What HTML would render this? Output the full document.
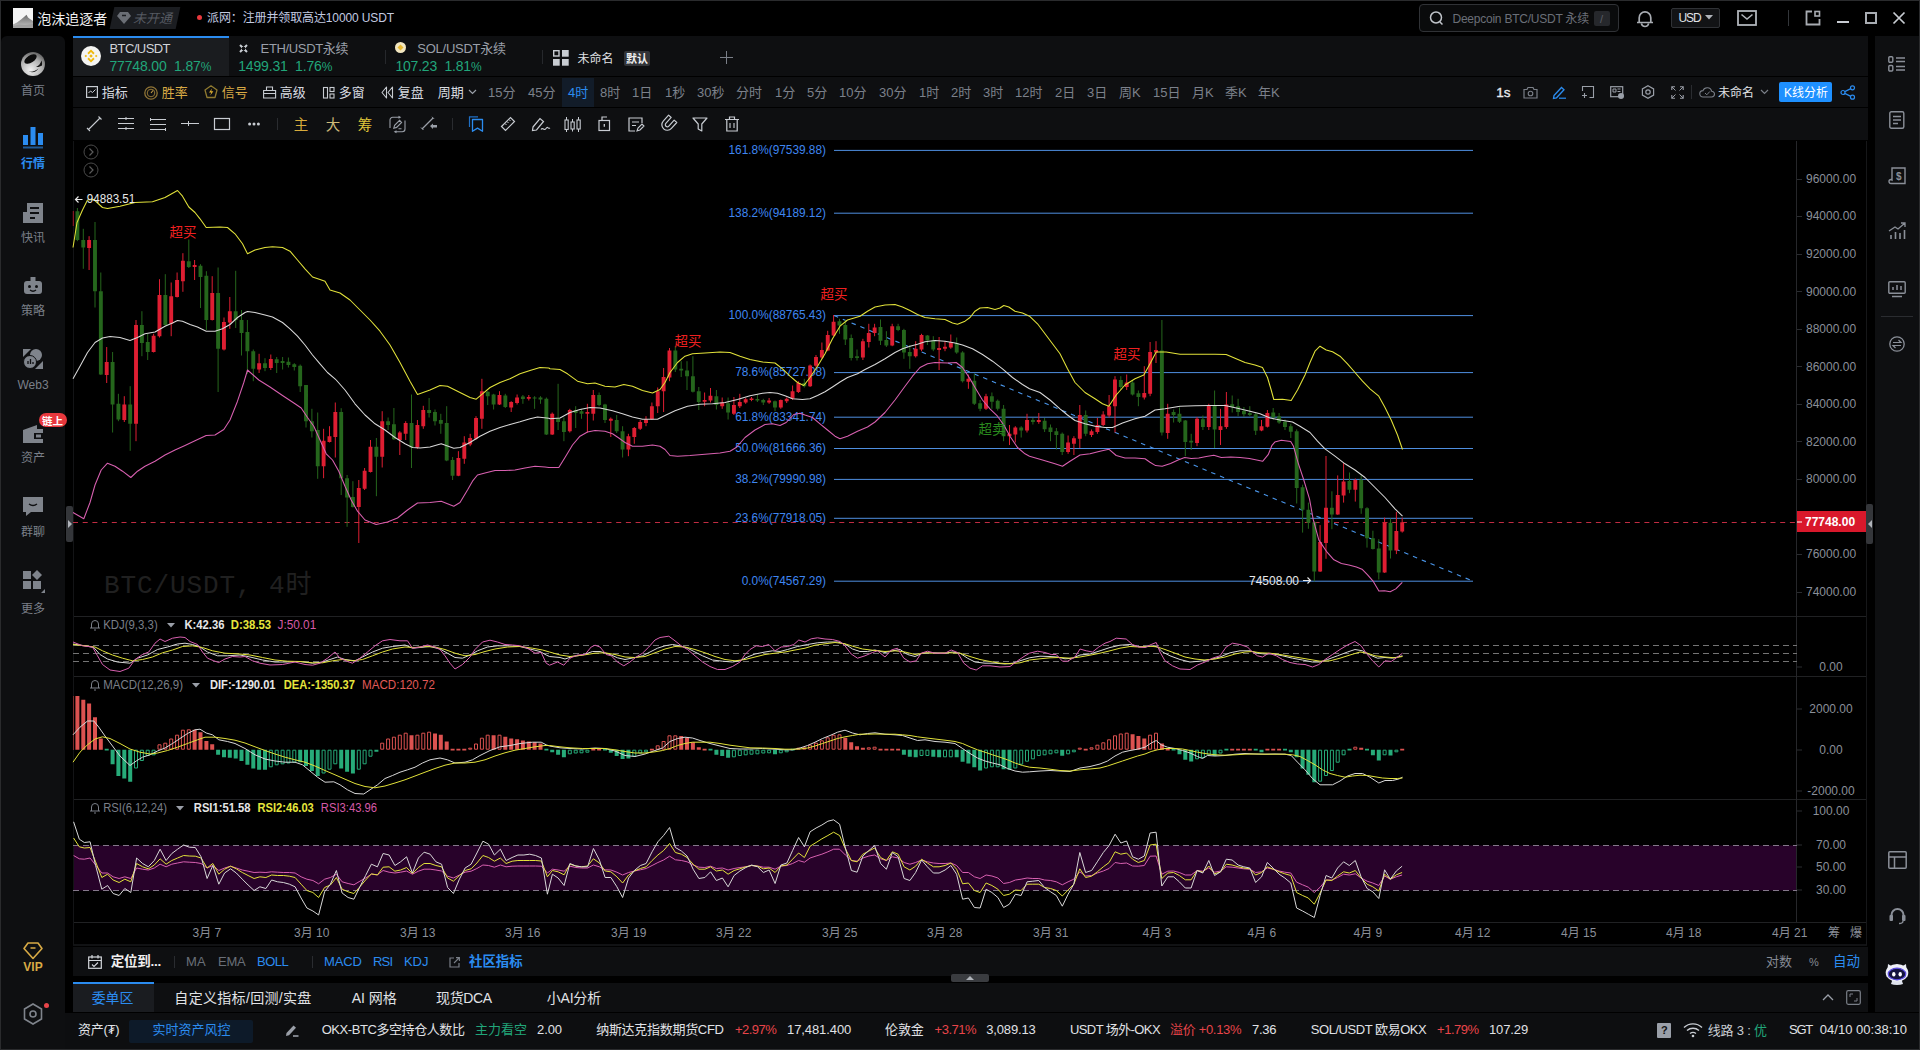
<!DOCTYPE html>
<html lang="zh-CN"><head><meta charset="utf-8"><title>BTC/USDT</title><style>
*{box-sizing:border-box;margin:0;padding:0}
html,body{width:1920px;height:1050px;overflow:hidden;background:#000}
body{position:relative;font-family:"Liberation Sans","Noto Sans CJK SC",sans-serif;font-size:12px;color:#d4d7dc}
.a{position:absolute}
.t{position:absolute;white-space:nowrap;line-height:20px;height:20px}
.p{position:absolute;background:#0e0f11}
.g{color:#8a8f99}
.w{color:#d4d7dc}
.b{color:#2b8cf0}
.gold{color:#d8aa45}
.up{color:#21a67a}
.rd{color:#e8454a}
svg.i{position:absolute;overflow:visible}
</style></head><body>
<div class="a" style="left:0;top:0;width:1920px;height:1050px;border:1px solid #2a2b2d;border-bottom:2px solid #2a2b2d"></div>
<div class="p" style="left:1px;top:36px;width:64px;height:1013px;border-radius:6px 6px 0 0"></div>
<div class="p" style="left:73px;top:36px;width:1795px;height:40px;"></div>
<div class="p" style="left:73px;top:77px;width:1795px;height:30px;"></div>
<div class="p" style="left:73px;top:108px;width:1795px;height:32px;"></div>
<div class="p" style="left:73px;top:947px;width:1795px;height:29px;"></div>
<div class="p" style="left:73px;top:983px;width:1795px;height:29px;"></div>
<div class="p" style="left:65px;top:1013px;width:1854px;height:36px;background:#0d0e10"></div>
<div class="p" style="left:1875px;top:36px;width:44px;height:976px"></div>
<svg class="i" style="left:13px;top:8px" width="20" height="20"><defs><linearGradient id="av" x1="0" y1="0" x2="0" y2="1"><stop offset="0" stop-color="#6a6a6a"/><stop offset="1" stop-color="#c8c8c8"/></linearGradient></defs><rect width="20" height="20" fill="#f4f4f4"/><path d="M0,20v-3.500l4,-2l4,-3l3,-2.500l2.500,-2.200l1.500,2.700l2,1.500l3,2v7z" fill="url(#av)"/><path d="M0,20v-2l6,-1.500l6,0.500l8,-1v4z" fill="#9a9a9a" opacity="0.8"/></svg>
<span class="t " style="left:37.3px;top:9px;font-size:14px;color:#f0f0f0">泡沫追逐者</span>
<div class="a" style="left:112px;top:7px;width:66px;height:22px;background:#1b1d21;transform:skewX(-12deg)"></div>
<svg class="i" style="left:117px;top:11px" width="14" height="13"><path d="M3,1h8l3,4l-7,8l-7,-8z" fill="#6a6e75"/><path d="M5,4.5h4" stroke="#1b1d21" stroke-width="1.5"/></svg>
<span class="t " style="left:133px;top:9px;font-size:13px;color:#565a62;font-style:italic">未开通</span>
<div class="a" style="left:197px;top:15px;width:5px;height:5px;border-radius:50%;background:#e8383d"></div>
<span class="t " style="left:207px;top:8.399999999999999px;font-size:12px;color:#c2cae0;letter-spacing:-0.119px">派网：注册并领取高达10000 USDT</span>
<div class="a" style="left:1419px;top:4px;width:200px;height:28px;border:1px solid #303236;border-radius:4px;background:#0a0b0c"></div>
<svg class="i" style="left:1429px;top:10px" width="16" height="16"><circle cx="7" cy="7.5" r="5.5" fill="none" stroke="#c0c4ca" stroke-width="1.5"/><path d="M11,12l2.5,2.5" stroke="#c0c4ca" stroke-width="1.5"/></svg>
<span class="t " style="left:1452.5px;top:9px;font-size:12px;color:#6a6f78;letter-spacing:-0.238px">Deepcoin BTC/USDT 永续</span>
<div class="a" style="left:1594px;top:11px;width:16px;height:15px;background:#26282c;border-radius:2px"></div>
<span class="t " style="left:1600px;top:9px;font-size:11px;color:#5a5e66">/</span>
<svg class="i" style="left:1636px;top:9px" width="18" height="19"><path d="M1,13.500h16M3.200,13.500v-4.800a5.800,5.800 0 0 1 11.600,0v4.800M5.500,14.500a3.500,3 0 0 0 7,0" fill="none" stroke="#a8acb2" stroke-width="1.700"/></svg>
<div class="a" style="left:1671px;top:8px;width:49px;height:20px;border:1px solid #303236;border-radius:2px;background:#121315"></div>
<span class="t " style="left:1678.5px;top:8.3px;font-size:12px;color:#e0e2e6;letter-spacing:-1.115px">USD</span>
<svg class="i" style="left:1705px;top:15px" width="8" height="5"><path d="M0,0h8l-4,4.5z" fill="#b0b4ba"/></svg>
<svg class="i" style="left:1737px;top:10px" width="20" height="16"><rect x="1" y="1" width="18" height="14" fill="none" stroke="#b0b4ba" stroke-width="1.800"/><path d="M4.500,4.500l5.500,4.500l5.500,-4.500" fill="none" stroke="#b0b4ba" stroke-width="1.600"/></svg>
<div class="a" style="left:1788px;top:10px;width:1px;height:16px;background:#33363a"></div>
<svg class="i" style="left:1805px;top:10px" width="16" height="16"><path d="M7,1.500H1.500V14.500H14.500V9" fill="none" stroke="#a8acb2" stroke-width="1.800"/><rect x="10" y="1.500" width="4.500" height="4.500" fill="none" stroke="#a8acb2" stroke-width="1.600"/></svg>
<div class="a" style="left:1837px;top:21px;width:12px;height:2px;background:#c8ccd2"></div>
<div class="a" style="left:1865px;top:12px;width:12px;height:12px;border:2px solid #a8acb2"></div>
<svg class="i" style="left:1893px;top:12px" width="12" height="12"><path d="M0.5,0.5l11,11M11.5,0.5l-11,11" stroke="#c8ccd2" stroke-width="1.7"/></svg>
<div class="a" style="left:73px;top:38px;width:156px;height:38px;background:#1a1c1f"></div>
<div class="a" style="left:73px;top:36px;width:156px;height:2px;background:#2b8cf0"></div>
<div class="a" style="left:81px;top:46px;width:20px;height:20px;border-radius:50%;background:#f4f4f2"></div>
<svg class="i" style="left:84px;top:49px" width="14" height="14" viewBox="0 0 14 14"><g fill="#f0b90b"><path d="M7,5.200L8.800,7L7,8.800L5.200,7Z"/><path d="M7,0.500L10.600,4.100L9.300,5.400L7,3.100L4.700,5.400L3.400,4.100Z"/><path d="M7,13.500L10.600,9.900L9.300,8.600L7,10.900L4.700,8.600L3.400,9.900Z"/><path d="M1.800,5.700L3.100,7L1.800,8.300L0.500,7Z"/><path d="M12.200,5.700L13.500,7L12.200,8.300L10.900,7Z"/></g></svg>
<span class="t " style="left:109.4px;top:39px;font-size:13px;color:#d0d3d8;letter-spacing:-0.550px">BTC/USDT</span>
<span class="t up" style="left:109.4px;top:56.3px;font-size:14px;;letter-spacing:-0.153px">77748.00&nbsp;&nbsp;1.87<span style="font-size:12px">%</span></span>
<svg class="i" style="left:239px;top:44px" width="9" height="9"><path d="M1,1l7,7M8,1l-7,7" stroke="#c8ccd2" stroke-width="2"/><rect x="3" y="3" width="3" height="3" fill="#0e0f11"/></svg>
<span class="t " style="left:260.6px;top:39px;font-size:13px;color:#9a9fa8;letter-spacing:-0.352px">ETH/USDT永续</span>
<span class="t up" style="left:238.2px;top:56.3px;font-size:14px;;letter-spacing:-0.165px">1499.31&nbsp;&nbsp;1.76<span style="font-size:12px">%</span></span>
<div class="a" style="left:385px;top:50px;width:1px;height:14px;background:#26282c"></div>
<div class="a" style="left:395px;top:42px;width:11px;height:11px;border-radius:50%;background:#f2e6c0"></div>
<svg class="i" style="left:397px;top:44px" width="7" height="7"><path d="M3.5,0.5l3,3l-3,3l-3,-3z" fill="#e8b830"/></svg>
<span class="t " style="left:417.3px;top:39px;font-size:13px;color:#9a9fa8;letter-spacing:-0.252px">SOL/USDT永续</span>
<span class="t up" style="left:395.4px;top:56.3px;font-size:14px;;letter-spacing:-0.195px">107.23&nbsp;&nbsp;1.81<span style="font-size:12px">%</span></span>
<div class="a" style="left:542px;top:50px;width:1px;height:14px;background:#26282c"></div>
<svg class="i" style="left:553px;top:50px" width="16" height="16"><g fill="#c8ccd2"><rect x="0.700" y="0.700" width="5.300" height="5.300" fill="none" stroke="#c8ccd2" stroke-width="1.400"/><rect x="9" y="0" width="6.700" height="6.700"/><rect x="0" y="9" width="6.700" height="6.700"/><rect x="9" y="9" width="6.700" height="6.700"/></g></svg>
<span class="t " style="left:577.5px;top:48.8px;font-size:12px;color:#e0e2e6">未命名</span>
<div class="a" style="left:624px;top:51px;width:26px;height:15px;background:#323438;border-radius:2px"></div>
<span class="t " style="left:626px;top:49.2px;font-size:11px;color:#f0f0f0;font-weight:bold">默认</span>
<svg class="i" style="left:720px;top:51px" width="13" height="13"><path d="M6.5,0v13M0,6.5h13" stroke="#7a7f88" stroke-width="1"/></svg>
<svg class="i" style="left:86px;top:86px" width="12" height="12"><rect x="0.600" y="0.600" width="10.800" height="10.800" fill="none" stroke="#c8ccd2" stroke-width="1.200"/><path d="M2.500,7l2,-2l2,1.500l3,-3" fill="none" stroke="#c8ccd2" stroke-width="1"/></svg>
<span class="t " style="left:101.8px;top:83.3px;font-size:13px;color:#d8dbe0">指标</span>
<svg class="i" style="left:144px;top:85.5px" width="14" height="14"><circle cx="7" cy="7" r="6.200" fill="none" stroke="#8f7436" stroke-width="1.300"/><circle cx="7" cy="7" r="3.800" fill="none" stroke="#8f7436" stroke-width="1"/><path d="M7,7l2,-2.500" stroke="#c09a45" stroke-width="1.200"/></svg>
<span class="t gold" style="left:161.8px;top:83.3px;font-size:13px;">胜率</span>
<svg class="i" style="left:204px;top:85px" width="14" height="14"><path d="M7,0.800l6,4.200l-2,7.500h-8l-2,-7.500z" fill="none" stroke="#8f7a30" stroke-width="1.300" stroke-linejoin="round"/><path d="M8,3.500l-3,4h2.200l-1,3l3.200,-4.200h-2.200z" fill="#e0b030"/></svg>
<span class="t gold" style="left:221.8px;top:83.3px;font-size:13px;">信号</span>
<svg class="i" style="left:263px;top:86px" width="14" height="13"><path d="M0.600,4.500h12v7.500h-12zM3.500,4.500v-3.500h6v3.500M0.600,7.500h12" fill="none" stroke="#c8ccd2" stroke-width="1.100"/></svg>
<span class="t " style="left:279.8px;top:83.3px;font-size:13px;color:#d8dbe0">高级</span>
<svg class="i" style="left:322.5px;top:86.5px" width="12" height="12"><rect x="0.500" y="0.500" width="4" height="10.500" fill="none" stroke="#c8ccd2" stroke-width="1.100"/><rect x="7" y="0.500" width="4" height="4" fill="none" stroke="#c8ccd2" stroke-width="1.100"/><rect x="7" y="7" width="4" height="4" fill="none" stroke="#c8ccd2" stroke-width="1.100"/></svg>
<span class="t " style="left:338.8px;top:83.3px;font-size:13px;color:#d8dbe0">多窗</span>
<svg class="i" style="left:381px;top:86px" width="13" height="13"><path d="M5.500,1l-4.500,5.500l4.500,5.500zM11.500,1l-4.500,5.500l4.500,5.500z" fill="none" stroke="#c8ccd2" stroke-width="1.100" stroke-linejoin="round"/></svg>
<span class="t " style="left:397.8px;top:83.3px;font-size:13px;color:#d8dbe0">复盘</span>
<span class="t " style="left:437.8px;top:83.3px;font-size:13px;color:#d8dbe0">周期</span>
<svg class="i" style="left:468px;top:89px" width="9" height="6"><path d="M1,1l3.5,3.5l3.5,-3.5" fill="none" stroke="#9a9fa8" stroke-width="1.2"/></svg>
<div class="a" style="left:562px;top:78px;width:32px;height:29px;background:#121c29"></div>
<span class="t " style="left:488px;top:83px;font-size:13px;color:#7c818b">15分</span>
<span class="t " style="left:528px;top:83px;font-size:13px;color:#7c818b">45分</span>
<span class="t b" style="left:568px;top:83px;font-size:13px;">4时</span>
<span class="t " style="left:600px;top:83px;font-size:13px;color:#7c818b">8时</span>
<span class="t " style="left:632px;top:83px;font-size:13px;color:#7c818b">1日</span>
<span class="t " style="left:665px;top:83px;font-size:13px;color:#7c818b">1秒</span>
<span class="t " style="left:697px;top:83px;font-size:13px;color:#7c818b">30秒</span>
<span class="t " style="left:736px;top:83px;font-size:13px;color:#7c818b">分时</span>
<span class="t " style="left:775px;top:83px;font-size:13px;color:#7c818b">1分</span>
<span class="t " style="left:807px;top:83px;font-size:13px;color:#7c818b">5分</span>
<span class="t " style="left:839px;top:83px;font-size:13px;color:#7c818b">10分</span>
<span class="t " style="left:879px;top:83px;font-size:13px;color:#7c818b">30分</span>
<span class="t " style="left:919px;top:83px;font-size:13px;color:#7c818b">1时</span>
<span class="t " style="left:951px;top:83px;font-size:13px;color:#7c818b">2时</span>
<span class="t " style="left:983px;top:83px;font-size:13px;color:#7c818b">3时</span>
<span class="t " style="left:1015px;top:83px;font-size:13px;color:#7c818b">12时</span>
<span class="t " style="left:1055px;top:83px;font-size:13px;color:#7c818b">2日</span>
<span class="t " style="left:1087px;top:83px;font-size:13px;color:#7c818b">3日</span>
<span class="t " style="left:1119px;top:83px;font-size:13px;color:#7c818b">周K</span>
<span class="t " style="left:1153px;top:83px;font-size:13px;color:#7c818b">15日</span>
<span class="t " style="left:1192px;top:83px;font-size:13px;color:#7c818b">月K</span>
<span class="t " style="left:1225px;top:83px;font-size:13px;color:#7c818b">季K</span>
<span class="t " style="left:1258px;top:83px;font-size:13px;color:#7c818b">年K</span>
<span class="t " style="left:1496.3px;top:82.6px;font-size:13.5px;color:#e8eaee;-webkit-text-stroke:0.35px #e8eaee;letter-spacing:-0.133px">1s</span>
<svg class="i" style="left:1523px;top:86px" width="15" height="13"><path d="M1,3.5h3l1,-2h5l1,2h3v8.5h-13z" fill="none" stroke="#7a7f88" stroke-width="1.2"/><circle cx="7.5" cy="7.5" r="2.3" fill="none" stroke="#7a7f88" stroke-width="1.1"/></svg>
<svg class="i" style="left:1552px;top:85px" width="15" height="14"><path d="M2,10.5l7.5,-8l2.5,2.3l-7.5,8l-3,0.6z" fill="none" stroke="#2b8cf0" stroke-width="1.3"/><path d="M7,13.2h7" stroke="#2b8cf0" stroke-width="1.2"/></svg>
<svg class="i" style="left:1582px;top:86px" width="12" height="12"><path d="M0.500,5V0.500H11.500V11.500H7.500" fill="none" stroke="#9a9fa8" stroke-width="1.100"/><path d="M0,9.500h5M2.500,7v5" fill="none" stroke="#9a9fa8" stroke-width="1.100"/></svg>
<svg class="i" style="left:1610px;top:86px" width="15" height="13"><rect x="0.7" y="0.7" width="12" height="10" fill="none" stroke="#9a9fa8" stroke-width="1.2"/><path d="M3,3h3v3h-3zM7.5,3h3M7.5,5.5h3" stroke="#9a9fa8" stroke-width="1" fill="none"/><circle cx="11" cy="10" r="3" fill="#9a9fa8"/></svg>
<svg class="i" style="left:1641px;top:85px" width="14" height="14"><path d="M7,0.8l5.6,3.1v6.2l-5.6,3.1l-5.6,-3.1v-6.2z" fill="none" stroke="#9a9fa8" stroke-width="1.2"/><circle cx="7" cy="7" r="2.2" fill="none" stroke="#9a9fa8" stroke-width="1.2"/></svg>
<svg class="i" style="left:1670.5px;top:86px" width="13" height="13"><path d="M0.800,4v-3.200h3.200M9,0.800h3.200v3.200M12.200,9v3.200h-3.200M4,12.200h-3.200v-3.200" fill="none" stroke="#9a9fa8" stroke-width="1.100"/><path d="M1,1l3.500,3.500M12,1l-3.500,3.500M12,12l-3.500,-3.500M1,12l3.500,-3.500" stroke="#9a9fa8" stroke-width="1"/></svg>
<div class="a" style="left:1691px;top:85px;width:1px;height:14px;background:#2a2c30"></div>
<svg class="i" style="left:1699px;top:86px" width="17" height="12"><path d="M4,11a3.2,3.2 0 0 1 0,-6.4a4.5,4.5 0 0 1 8.6,0.6a2.9,2.9 0 0 1 0,5.8z" fill="none" stroke="#7a7f88" stroke-width="1.1"/><path d="M6,7l1.8,1.8l3,-3.3" fill="none" stroke="#7a7f88" stroke-width="1"/></svg>
<span class="t " style="left:1718px;top:83px;font-size:12px;color:#e0e2e6">未命名</span>
<svg class="i" style="left:1760px;top:89px" width="9" height="6"><path d="M1,1l3.5,3.5l3.5,-3.5" fill="none" stroke="#7a7f88" stroke-width="1.2"/></svg>
<div class="a" style="left:1779px;top:82px;width:53px;height:20px;background:#1e90ff;border-radius:2px"></div>
<span class="t " style="left:1784px;top:83px;font-size:12px;color:#fff">K线分析</span>
<svg class="i" style="left:1840px;top:85px" width="16" height="15"><circle cx="3" cy="7.5" r="2" fill="none" stroke="#2b8cf0" stroke-width="1.2"/><circle cx="12.5" cy="2.8" r="2" fill="none" stroke="#2b8cf0" stroke-width="1.2"/><circle cx="12.5" cy="12.2" r="2" fill="none" stroke="#2b8cf0" stroke-width="1.2"/><path d="M4.8,6.6l6,-3M4.8,8.4l6,3" stroke="#2b8cf0" stroke-width="1.2"/></svg>
<svg class="i" style="left:86px;top:116px" width="16" height="16"><path d="M2.500,13.500l11.500,-11.500M1,12l3,3M12.500,0.500l3,3" stroke="#c8ccd2" stroke-width="1.100" fill="none"/></svg>
<svg class="i" style="left:118px;top:116px" width="16" height="16"><path d="M0,2.500h16M0,7.500h16M0,12.500h16M8,1v3M8,11v3" stroke="#c8ccd2" stroke-width="1" fill="none"/></svg>
<svg class="i" style="left:150px;top:116px" width="16" height="16"><path d="M0,3.500h16M0,8.500h16M0,13.500h16M0.500,2v3M15.500,12v3" stroke="#c8ccd2" stroke-width="1" fill="none"/></svg>
<svg class="i" style="left:181px;top:116px" width="18" height="16"><path d="M0,7.500h18M7.500,5v5" stroke="#c8ccd2" stroke-width="1" fill="none"/></svg>
<svg class="i" style="left:214px;top:118px" width="16" height="12"><rect x="0.500" y="0.500" width="15" height="11" stroke="#c8ccd2" stroke-width="1.200" fill="none"/></svg>
<svg class="i" style="left:248px;top:122px" width="12" height="4"><circle cx="1.600" cy="2" r="1.500" fill="#c8ccd2"/><circle cx="6" cy="2" r="1.500" fill="#c8ccd2"/><circle cx="10.400" cy="2" r="1.500" fill="#c8ccd2"/></svg>
<div class="a" style="left:277px;top:118px;width:1px;height:12px;background:#2a2c30"></div>
<span class="t " style="left:293.7px;top:115px;font-size:14.5px;color:#d8ac3c">主</span>
<span class="t " style="left:325.7px;top:115px;font-size:14.5px;color:#cfba78">大</span>
<span class="t " style="left:357.7px;top:115px;font-size:14.5px;color:#e0c63a">筹</span>
<svg class="i" style="left:388.5px;top:115.5px" width="17" height="17"><path d="M1,12V4a2.700,2.700 0 0 1 2.700,-2.700H10.500M16,4.500V13a2.700,2.700 0 0 1 -2.700,2.700H6.500" stroke="#9a9fa8" stroke-width="1.100" fill="none"/><path d="M9.500,-0.200l2.800,1.500l-2.800,1.500zM7.500,14.200l-2.800,1.500l2.800,1.500z" fill="#9a9fa8"/><path d="M4.800,12.200l0.800,-2.800l5,-5l2,2l-5,5zM9.500,12.700h3" stroke="#9a9fa8" fill="none" stroke-width="1.100"/></svg>
<svg class="i" style="left:421px;top:116px" width="17" height="16"><path d="M1,13l11,-11" stroke="#9a9fa8" stroke-width="1.2"/><path d="M0,11.5l2.5,2.5M11,0.8l2,2" stroke="#9a9fa8"/><path d="M9,10l3,-2.5v1.5h4v2.5h-4v1.5z" fill="#9a9fa8"/></svg>
<div class="a" style="left:452px;top:118px;width:1px;height:12px;background:#2a2c30"></div>
<svg class="i" style="left:468px;top:116px" width="16" height="16"><path d="M1.500,11V0.800H10" stroke="#1f6fc4" stroke-width="1.200" fill="none"/><path d="M4.500,3.500h10v11.800l-5,-3.200l-5,3.200z" stroke="#2b8cf0" stroke-width="1.300" fill="none" stroke-linejoin="round"/></svg>
<svg class="i" style="left:500px;top:116px" width="16" height="16"><path d="M1.5,10.5l9,-9l4,4l-9,9z" stroke="#c8ccd2" stroke-width="1.2" fill="none"/><path d="M5,7.5l1.5,1.5M7,5.5l1.5,1.5M9,3.5l1.5,1.5" stroke="#c8ccd2" stroke-width="1"/></svg>
<svg class="i" style="left:531px;top:116px" width="19" height="16"><path d="M2,11l7,-8.5l3.5,3l-7,8.5l-4,0.5z" stroke="#c8ccd2" stroke-width="1.2" fill="none"/><path d="M10,13.5c2,-3 3,2 5,-1s2,1 4,-0.5" stroke="#c8ccd2" stroke-width="1.1" fill="none"/></svg>
<svg class="i" style="left:564px;top:116px" width="17" height="16"><path d="M2.500,1v3M2.500,13v3M8.500,3v3M8.500,13v2.500M14.500,1v3M14.500,13v3" stroke="#c8ccd2" stroke-width="1"/><rect x="1" y="4" width="3.200" height="9.500" fill="none" stroke="#c8ccd2" stroke-width="1.100"/><rect x="7" y="6" width="3.200" height="7" fill="none" stroke="#c8ccd2" stroke-width="1.100"/><rect x="13" y="4" width="3.200" height="9" fill="none" stroke="#c8ccd2" stroke-width="1.100"/></svg>
<svg class="i" style="left:598px;top:116px" width="13" height="16"><rect x="1" y="4.500" width="10.500" height="10" fill="none" stroke="#c8ccd2" stroke-width="1.200"/><path d="M4,4.500v-3.500h5" fill="none" stroke="#c8ccd2" stroke-width="1.200"/><path d="M6.300,8v2.800" stroke="#c8ccd2" stroke-width="1.300"/></svg>
<svg class="i" style="left:628px;top:117px" width="16" height="15"><path d="M14,6v-5h-13v13h6" fill="none" stroke="#c8ccd2" stroke-width="1.2"/><path d="M4,5h7M4,8.5h4" stroke="#c8ccd2" stroke-width="1.1"/><path d="M9,14l1,-3l4,-4l2,2l-4,4z" fill="none" stroke="#c8ccd2" stroke-width="1.1"/></svg>
<svg class="i" style="left:660px;top:116px" width="16" height="16"><g transform="rotate(42 8 8)"><path d="M2.500,1v8a5.500,5.500 0 0 0 11,0v-8h-3.500v8a2,2 0 0 1 -4,0v-8z" fill="none" stroke="#c8ccd2" stroke-width="1.200" stroke-linejoin="round"/></g></svg>
<svg class="i" style="left:692px;top:117px" width="16" height="15"><path d="M1,1h14l-5.2,6v7l-3.6,-2v-5z" fill="none" stroke="#c8ccd2" stroke-width="1.2" stroke-linejoin="round"/></svg>
<svg class="i" style="left:725px;top:116px" width="14" height="16"><path d="M0,3.5h14M4.5,3.5v-2.5h5v2.5M1.8,3.5v11.5h10.4v-11.5" fill="none" stroke="#c8ccd2" stroke-width="1.2"/><path d="M5,7v5M9,7v5" stroke="#c8ccd2" stroke-width="1.1"/></svg>
<svg width="1920" height="1050" viewBox="0 0 1920 1050" style="position:absolute;left:0;top:0" font-family="Liberation Sans, Noto Sans CJK SC, sans-serif">
<rect x="73" y="845.5" width="1724" height="45" fill="#28022a"/>
<line x1="73" y1="616.5" x2="1867" y2="616.5" stroke="#202123" stroke-width="1"/>
<line x1="73" y1="676.5" x2="1867" y2="676.5" stroke="#202123" stroke-width="1"/>
<line x1="73" y1="799.5" x2="1867" y2="799.5" stroke="#202123" stroke-width="1"/>
<line x1="73" y1="922.5" x2="1867" y2="922.5" stroke="#202123" stroke-width="1"/>
<rect x="73" y="944" width="1794" height="2" fill="#111214"/><line x1="1866.5" y1="141" x2="1866.5" y2="945" stroke="#161719" stroke-width="1"/>
<line x1="1796.5" y1="141" x2="1796.5" y2="922" stroke="#26272a" stroke-width="1"/>
<line x1="73.5" y1="141" x2="73.5" y2="945" stroke="#131416" stroke-width="1"/>
<line x1="73" y1="645.5" x2="1797" y2="645.5" stroke="#747474" stroke-width="1" stroke-dasharray="6,4"/>
<line x1="73" y1="653.5" x2="1797" y2="653.5" stroke="#747474" stroke-width="1" stroke-dasharray="6,4"/>
<line x1="73" y1="661.5" x2="1797" y2="661.5" stroke="#747474" stroke-width="1" stroke-dasharray="6,4"/>
<line x1="73" y1="845.5" x2="1797" y2="845.5" stroke="#84788a" stroke-width="1" stroke-dasharray="6,4"/>
<line x1="73" y1="890.5" x2="1797" y2="890.5" stroke="#84788a" stroke-width="1" stroke-dasharray="6,4"/>
<text x="104" y="593" fill="#202020" font-size="26" letter-spacing="0.9" font-family="Liberation Mono, Noto Sans CJK SC, monospace">BTC/USDT, 4时</text>
<line x1="834" y1="150.4" x2="1473" y2="150.4" stroke="#4f8fe0" stroke-width="1"/>
<text x="826" y="153.70000000000002" text-anchor="end" fill="#3f86f0" font-size="11.85">161.8%(97539.88)</text>
<line x1="834" y1="213.2" x2="1473" y2="213.2" stroke="#4f8fe0" stroke-width="1"/>
<text x="826" y="216.5" text-anchor="end" fill="#3f86f0" font-size="11.85">138.2%(94189.12)</text>
<line x1="834" y1="315.6" x2="1473" y2="315.6" stroke="#4f8fe0" stroke-width="1"/>
<text x="826" y="318.90000000000003" text-anchor="end" fill="#3f86f0" font-size="11.85">100.0%(88765.43)</text>
<line x1="834" y1="372.6" x2="1473" y2="372.6" stroke="#4f8fe0" stroke-width="1"/>
<text x="826" y="375.90000000000003" text-anchor="end" fill="#3f86f0" font-size="11.85">78.6%(85727.08)</text>
<line x1="834" y1="417.2" x2="1473" y2="417.2" stroke="#4f8fe0" stroke-width="1"/>
<text x="826" y="420.5" text-anchor="end" fill="#3f86f0" font-size="11.85">61.8%(83341.74)</text>
<line x1="834" y1="448.5" x2="1473" y2="448.5" stroke="#4f8fe0" stroke-width="1"/>
<text x="826" y="451.8" text-anchor="end" fill="#3f86f0" font-size="11.85">50.0%(81666.36)</text>
<line x1="834" y1="479.4" x2="1473" y2="479.4" stroke="#4f8fe0" stroke-width="1"/>
<text x="826" y="482.7" text-anchor="end" fill="#3f86f0" font-size="11.85">38.2%(79990.98)</text>
<line x1="834" y1="518.3" x2="1473" y2="518.3" stroke="#4f8fe0" stroke-width="1"/>
<text x="826" y="521.5999999999999" text-anchor="end" fill="#3f86f0" font-size="11.85">23.6%(77918.05)</text>
<line x1="834" y1="581.2" x2="1473" y2="581.2" stroke="#4f8fe0" stroke-width="1"/>
<text x="826" y="584.5" text-anchor="end" fill="#3f86f0" font-size="11.85">0.0%(74567.29)</text>
<line x1="834" y1="315.6" x2="1473" y2="581.2" stroke="#4a96ea" stroke-width="1.1" stroke-dasharray="4.5,5"/>
<line x1="73" y1="522.5" x2="1797" y2="522.5" stroke="#c02c42" stroke-width="1" stroke-dasharray="5,4.7"/>
<path d="M89.1,236.2V270.0M106.7,347.0V383.0M124.3,396.2V422.0M136.0,320.0V441.2M153.6,333.8V352.5M159.5,279.2V337.5M171.2,282.5V336.2M177.1,272.5V297.5M182.9,253.2V291.8M194.6,260.0V280.0M212.2,276.2V320.5M224.0,317.5V350.5M229.8,297.0V328.8M259.1,353.8V373.0M270.8,354.5V370.0M323.6,428.8V478.2M329.5,426.2V442.5M335.3,402.5V457.5M358.8,480.0V543.0M364.6,468.0V490.0M370.5,440.0V472.5M382.2,411.2V467.5M399.8,431.2V455.0M405.7,421.2V440.0M417.4,420.0V448.8M423.3,405.8V428.8M458.4,451.2V476.2M464.3,436.2V463.8M470.2,433.8V446.2M476.0,416.2V440.0M481.9,378.8V428.8M499.5,391.2V405.0M511.2,401.2V412.0M517.1,394.5V404.5M528.8,395.0V400.5M552.2,412.5V435.0M569.8,408.8V432.5M587.4,403.8V432.5M593.3,390.0V420.5M610.8,417.5V437.0M628.4,433.8V456.2M634.3,427.0V443.8M640.2,420.0V430.0M646.0,416.2V426.2M651.9,402.5V420.0M657.7,387.5V413.0M663.6,368.0V412.0M669.5,348.0V381.2M704.6,392.5V406.2M710.5,388.0V402.5M722.2,397.5V408.8M733.9,397.0V415.0M739.8,393.8V408.0M745.7,398.0V403.8M751.5,397.0V401.2M769.1,398.0V403.8M780.8,399.5V408.8M786.7,397.5V403.0M792.6,385.5V400.0M798.4,381.2V393.0M810.1,364.5V387.0M816.0,355.0V367.5M821.9,342.5V358.8M827.7,330.8V351.2M833.6,315.0V336.2M862.9,338.8V360.0M868.8,323.8V347.5M874.6,323.8V336.2M892.2,323.8V346.2M915.7,341.2V357.5M921.5,333.8V351.2M939.1,337.0V370.0M945.0,341.2V351.2M950.8,334.5V348.8M968.4,374.5V388.8M986.0,393.8V410.0M1009.5,425.0V445.0M1015.3,426.2V442.5M1027.0,413.8V432.5M1038.8,413.0V423.8M1068.1,435.5V453.8M1073.9,436.2V455.0M1079.8,405.0V448.0M1091.5,429.5V437.0M1097.4,418.0V433.8M1103.2,411.2V426.2M1109.1,395.0V417.5M1115.0,376.2V432.5M1126.7,374.5V390.0M1144.3,366.2V399.5M1150.1,342.0V396.2M1156.0,341.2V363.0M1167.7,403.8V438.8M1197.0,417.0V446.2M1208.8,403.8V430.0M1220.5,408.8V445.0M1226.4,392.0V428.8M1261.5,420.0V431.2M1267.4,410.0V427.5M1320.1,525.1V572.0M1326.0,456.0V558.8M1337.7,475.4V514.8M1343.6,463.1V502.6M1355.3,478.5V501.6M1384.6,517.6V572.9M1396.4,511.9V554.1M1402.2,517.6V532.6" stroke="#de1e32" stroke-width="1" fill="none"/>
<path d="M87.17,240.0h3.9V248.0h-3.9ZM104.76,362.0h3.9V375.0h-3.9ZM122.35,404.5h3.9V420.0h-3.9ZM134.07,325.0h3.9V423.8h-3.9ZM151.66,335.8h3.9V352.0h-3.9ZM157.52,295.0h3.9V336.2h-3.9ZM169.24,296.2h3.9V323.8h-3.9ZM175.10,280.0h3.9V297.0h-3.9ZM180.97,260.8h3.9V281.2h-3.9ZM192.69,265.0h3.9V267.0h-3.9ZM210.28,293.0h3.9V320.0h-3.9ZM222.00,322.0h3.9V349.5h-3.9ZM227.86,311.2h3.9V322.5h-3.9ZM257.17,363.2h3.9V369.5h-3.9ZM268.90,359.0h3.9V368.0h-3.9ZM321.65,440.8h3.9V466.2h-3.9ZM327.52,436.2h3.9V442.0h-3.9ZM333.38,412.0h3.9V437.0h-3.9ZM356.83,488.0h3.9V507.0h-3.9ZM362.69,470.8h3.9V488.8h-3.9ZM368.55,446.8h3.9V472.0h-3.9ZM380.27,421.2h3.9V456.8h-3.9ZM397.86,432.5h3.9V440.0h-3.9ZM403.72,423.0h3.9V433.8h-3.9ZM415.45,425.0h3.9V447.5h-3.9ZM421.31,410.0h3.9V426.2h-3.9ZM456.48,458.0h3.9V475.8h-3.9ZM462.34,442.5h3.9V458.8h-3.9ZM468.20,438.0h3.9V444.5h-3.9ZM474.07,418.0h3.9V438.8h-3.9ZM479.93,391.2h3.9V418.8h-3.9ZM497.51,395.0h3.9V404.5h-3.9ZM509.24,402.0h3.9V407.5h-3.9ZM515.10,397.5h3.9V403.0h-3.9ZM526.82,397.0h3.9V398.8h-3.9ZM550.27,413.8h3.9V434.5h-3.9ZM567.86,410.0h3.9V431.2h-3.9ZM585.44,412.0h3.9V413.8h-3.9ZM591.31,395.0h3.9V413.8h-3.9ZM608.89,418.8h3.9V420.8h-3.9ZM626.48,436.2h3.9V449.5h-3.9ZM632.34,428.0h3.9V437.0h-3.9ZM638.20,422.0h3.9V428.8h-3.9ZM644.06,419.2h3.9V423.0h-3.9ZM649.93,406.2h3.9V419.2h-3.9ZM655.79,391.2h3.9V406.2h-3.9ZM661.65,377.0h3.9V391.2h-3.9ZM667.51,350.5h3.9V377.5h-3.9ZM702.68,400.0h3.9V401.8h-3.9ZM708.55,395.8h3.9V400.5h-3.9ZM720.27,402.5h3.9V406.2h-3.9ZM731.99,405.0h3.9V413.8h-3.9ZM737.86,402.0h3.9V406.2h-3.9ZM743.72,399.2h3.9V402.5h-3.9ZM749.58,398.5h3.9V400.0h-3.9ZM767.17,400.5h3.9V402.5h-3.9ZM778.89,400.0h3.9V407.5h-3.9ZM784.75,398.8h3.9V401.2h-3.9ZM790.61,391.2h3.9V398.8h-3.9ZM796.48,383.0h3.9V392.0h-3.9ZM808.20,365.5h3.9V386.2h-3.9ZM814.06,357.0h3.9V365.8h-3.9ZM819.92,350.0h3.9V357.5h-3.9ZM825.79,335.0h3.9V350.5h-3.9ZM831.65,321.8h3.9V335.5h-3.9ZM860.96,341.2h3.9V357.5h-3.9ZM866.82,333.0h3.9V342.0h-3.9ZM872.68,327.5h3.9V333.0h-3.9ZM890.27,326.2h3.9V345.5h-3.9ZM913.72,348.8h3.9V356.2h-3.9ZM919.58,335.0h3.9V349.5h-3.9ZM937.16,348.0h3.9V350.0h-3.9ZM943.03,346.8h3.9V348.8h-3.9ZM948.89,342.0h3.9V347.5h-3.9ZM966.47,378.8h3.9V381.8h-3.9ZM984.06,396.2h3.9V408.8h-3.9ZM1007.51,433.8h3.9V436.2h-3.9ZM1013.37,427.5h3.9V434.5h-3.9ZM1025.09,420.0h3.9V430.5h-3.9ZM1036.82,420.0h3.9V422.0h-3.9ZM1066.13,442.5h3.9V452.0h-3.9ZM1071.99,438.2h3.9V443.8h-3.9ZM1077.85,415.0h3.9V438.8h-3.9ZM1089.58,431.2h3.9V435.0h-3.9ZM1095.44,425.0h3.9V432.0h-3.9ZM1101.30,414.5h3.9V425.0h-3.9ZM1107.16,406.2h3.9V415.5h-3.9ZM1113.02,379.5h3.9V406.2h-3.9ZM1124.75,382.5h3.9V387.0h-3.9ZM1142.33,393.0h3.9V397.5h-3.9ZM1148.20,352.0h3.9V393.8h-3.9ZM1154.06,350.0h3.9V352.5h-3.9ZM1165.78,413.8h3.9V433.0h-3.9ZM1195.09,418.8h3.9V443.0h-3.9ZM1206.82,405.0h3.9V427.0h-3.9ZM1218.54,426.2h3.9V430.0h-3.9ZM1224.40,404.5h3.9V427.0h-3.9ZM1259.57,426.2h3.9V430.5h-3.9ZM1265.44,413.0h3.9V426.8h-3.9ZM1318.19,542.0h3.9V571.6h-3.9ZM1324.06,507.8h3.9V542.9h-3.9ZM1335.78,495.1h3.9V514.4h-3.9ZM1341.64,481.5h3.9V495.6h-3.9ZM1353.37,480.0h3.9V489.8h-3.9ZM1382.68,522.2h3.9V572.4h-3.9ZM1394.40,531.1h3.9V550.4h-3.9ZM1400.26,522.2h3.9V531.6h-3.9Z" fill="#de1e32"/>
<path d="M77.4,208.0V241.2M83.3,228.8V268.8M95.0,222.0V307.5M100.8,272.5V375.0M112.6,352.0V432.5M118.4,393.8V421.2M130.2,386.2V450.8M141.9,311.2V356.2M147.7,333.8V360.0M165.3,274.2V326.2M188.8,239.5V268.0M200.5,264.2V308.0M206.4,271.2V330.0M218.1,267.5V392.0M235.7,270.8V328.0M241.5,310.0V355.5M247.4,320.0V373.8M253.3,349.5V381.2M265.0,358.2V371.2M276.7,357.0V373.0M282.6,357.0V369.5M288.4,357.5V367.5M294.3,363.2V370.5M300.2,364.5V392.0M306.0,385.0V427.5M311.9,408.8V437.5M317.7,412.5V478.8M341.2,408.2V495.0M347.1,475.0V526.8M352.9,481.2V507.5M376.4,438.0V496.2M388.1,417.5V430.0M393.9,408.0V440.0M411.5,394.5V468.0M429.1,398.0V417.5M435.0,409.5V425.5M440.8,413.8V433.8M446.7,406.2V461.2M452.6,457.0V480.0M487.7,391.2V405.0M493.6,393.8V409.5M505.3,393.8V408.0M522.9,395.0V403.8M534.6,396.2V408.8M540.5,396.2V403.8M546.4,397.5V435.0M558.1,383.8V430.0M563.9,417.5V441.2M575.7,406.2V428.0M581.5,408.8V418.8M599.1,392.5V406.2M605.0,403.8V423.0M616.7,415.0V433.0M622.6,426.2V457.5M675.3,346.2V372.0M681.2,361.2V377.0M687.0,361.2V390.0M692.9,356.2V392.5M698.8,387.0V410.0M716.4,390.0V409.5M728.1,397.5V419.5M757.4,394.5V402.0M763.3,398.8V405.0M775.0,400.5V411.2M804.3,378.8V387.5M839.5,318.8V333.8M845.3,320.0V345.0M851.2,334.5V360.5M857.0,349.5V360.5M880.5,319.5V345.0M886.4,331.2V347.0M898.1,323.8V331.2M903.9,328.8V358.8M909.8,345.0V368.8M927.4,335.0V345.0M933.3,336.2V351.2M956.7,337.5V353.8M962.6,351.2V382.5M974.3,373.8V405.0M980.1,400.0V411.2M991.9,392.5V408.8M997.7,399.5V410.5M1003.6,405.0V441.2M1021.2,426.2V437.5M1032.9,418.0V424.5M1044.6,418.0V432.0M1050.5,424.5V441.2M1056.4,428.0V449.5M1062.2,432.5V455.0M1085.7,410.5V436.2M1120.8,376.2V390.0M1132.6,380.0V395.5M1138.4,390.5V406.2M1161.9,320.0V435.5M1173.6,409.5V422.5M1179.5,407.5V423.0M1185.3,420.0V456.2M1191.2,433.8V450.0M1202.9,415.5V430.0M1214.6,390.5V448.0M1232.2,395.5V412.5M1238.1,398.8V416.2M1243.9,407.0V417.0M1249.8,406.2V416.2M1255.7,412.5V435.0M1273.2,408.0V420.0M1279.1,413.0V423.8M1285.0,419.5V430.0M1290.8,423.8V438.0M1296.7,429.4V503.5M1302.6,484.7V532.6M1308.4,502.6V528.8M1314.3,521.3V581.4M1331.9,491.3V529.2M1349.5,472.5V493.2M1361.2,475.4V513.8M1367.0,507.2V547.6M1372.9,530.7V549.5M1378.8,539.1V579.5M1390.5,518.5V558.5" stroke="#25661c" stroke-width="1" fill="none"/>
<path d="M75.45,211.2h3.9V240.0h-3.9ZM81.31,240.0h3.9V247.5h-3.9ZM93.04,240.0h3.9V291.2h-3.9ZM98.90,291.2h3.9V374.5h-3.9ZM110.62,362.0h3.9V404.5h-3.9ZM116.48,403.8h3.9V419.5h-3.9ZM128.21,404.5h3.9V423.8h-3.9ZM139.93,325.0h3.9V343.0h-3.9ZM145.79,342.0h3.9V352.0h-3.9ZM163.38,295.0h3.9V325.0h-3.9ZM186.83,261.2h3.9V267.0h-3.9ZM198.55,265.8h3.9V277.0h-3.9ZM204.41,275.8h3.9V320.0h-3.9ZM216.14,293.0h3.9V348.8h-3.9ZM233.72,311.2h3.9V320.0h-3.9ZM239.59,320.0h3.9V333.0h-3.9ZM245.45,332.0h3.9V351.2h-3.9ZM251.31,351.2h3.9V368.8h-3.9ZM263.03,363.2h3.9V368.0h-3.9ZM274.76,359.2h3.9V363.0h-3.9ZM280.62,361.0h3.9V363.0h-3.9ZM286.48,361.8h3.9V365.0h-3.9ZM292.34,364.2h3.9V367.0h-3.9ZM298.21,365.8h3.9V386.2h-3.9ZM304.07,385.0h3.9V421.2h-3.9ZM309.93,421.2h3.9V431.2h-3.9ZM315.79,430.0h3.9V466.2h-3.9ZM339.24,412.0h3.9V478.2h-3.9ZM345.10,478.2h3.9V497.5h-3.9ZM350.96,497.0h3.9V507.0h-3.9ZM374.41,446.8h3.9V456.8h-3.9ZM386.14,421.2h3.9V425.0h-3.9ZM392.00,424.2h3.9V439.2h-3.9ZM409.58,423.0h3.9V447.5h-3.9ZM427.17,410.0h3.9V413.0h-3.9ZM433.03,412.0h3.9V421.2h-3.9ZM438.89,420.0h3.9V423.8h-3.9ZM444.76,423.0h3.9V460.5h-3.9ZM450.62,460.0h3.9V475.8h-3.9ZM485.79,391.8h3.9V396.2h-3.9ZM491.65,394.5h3.9V404.5h-3.9ZM503.38,395.5h3.9V407.0h-3.9ZM520.96,396.5h3.9V399.0h-3.9ZM532.69,397.5h3.9V398.5h-3.9ZM538.55,397.5h3.9V399.5h-3.9ZM544.41,398.8h3.9V434.5h-3.9ZM556.13,418.0h3.9V422.0h-3.9ZM562.00,421.2h3.9V432.0h-3.9ZM573.72,410.0h3.9V413.0h-3.9ZM579.58,411.2h3.9V413.8h-3.9ZM597.17,395.0h3.9V405.0h-3.9ZM603.03,404.5h3.9V420.0h-3.9ZM614.75,420.0h3.9V431.2h-3.9ZM620.62,431.2h3.9V449.5h-3.9ZM673.37,350.5h3.9V369.5h-3.9ZM679.24,368.8h3.9V370.5h-3.9ZM685.10,370.5h3.9V376.2h-3.9ZM690.96,376.2h3.9V391.8h-3.9ZM696.82,391.2h3.9V402.0h-3.9ZM714.41,396.2h3.9V405.0h-3.9ZM726.13,403.2h3.9V412.5h-3.9ZM755.44,399.0h3.9V400.5h-3.9ZM761.30,400.0h3.9V402.5h-3.9ZM773.03,401.2h3.9V407.5h-3.9ZM802.34,383.0h3.9V386.2h-3.9ZM837.51,321.2h3.9V325.5h-3.9ZM843.37,325.0h3.9V339.5h-3.9ZM849.23,338.0h3.9V358.0h-3.9ZM855.10,356.2h3.9V358.0h-3.9ZM878.54,327.0h3.9V340.8h-3.9ZM884.41,340.0h3.9V345.5h-3.9ZM896.13,326.2h3.9V330.0h-3.9ZM901.99,330.0h3.9V352.5h-3.9ZM907.85,352.0h3.9V356.2h-3.9ZM925.44,335.5h3.9V340.5h-3.9ZM931.30,340.5h3.9V349.5h-3.9ZM954.75,343.0h3.9V352.5h-3.9ZM960.61,352.5h3.9V381.2h-3.9ZM972.34,380.8h3.9V403.8h-3.9ZM978.20,403.2h3.9V408.8h-3.9ZM989.92,396.2h3.9V401.8h-3.9ZM995.78,400.8h3.9V408.8h-3.9ZM1001.65,408.8h3.9V436.2h-3.9ZM1019.23,427.5h3.9V430.5h-3.9ZM1030.96,420.0h3.9V422.0h-3.9ZM1042.68,420.8h3.9V429.2h-3.9ZM1048.54,427.5h3.9V432.0h-3.9ZM1054.40,431.2h3.9V435.0h-3.9ZM1060.27,433.8h3.9V452.0h-3.9ZM1083.71,415.0h3.9V433.8h-3.9ZM1118.89,380.0h3.9V387.0h-3.9ZM1130.61,382.5h3.9V394.5h-3.9ZM1136.47,393.2h3.9V397.0h-3.9ZM1159.92,350.5h3.9V432.5h-3.9ZM1171.64,412.0h3.9V415.0h-3.9ZM1177.51,413.8h3.9V421.8h-3.9ZM1183.37,420.5h3.9V442.0h-3.9ZM1189.23,440.8h3.9V442.5h-3.9ZM1200.95,419.2h3.9V427.0h-3.9ZM1212.68,405.0h3.9V429.5h-3.9ZM1230.26,404.2h3.9V407.0h-3.9ZM1236.13,406.2h3.9V412.0h-3.9ZM1241.99,410.8h3.9V414.2h-3.9ZM1247.85,413.0h3.9V415.0h-3.9ZM1253.71,414.2h3.9V430.8h-3.9ZM1271.30,412.5h3.9V417.5h-3.9ZM1277.16,416.2h3.9V422.5h-3.9ZM1283.02,421.8h3.9V427.0h-3.9ZM1288.88,426.2h3.9V431.8h-3.9ZM1294.75,431.3h3.9V487.9h-3.9ZM1300.61,487.2h3.9V509.7h-3.9ZM1306.47,509.7h3.9V522.8h-3.9ZM1312.33,522.2h3.9V571.6h-3.9ZM1329.92,507.8h3.9V514.4h-3.9ZM1347.50,481.0h3.9V489.8h-3.9ZM1359.23,479.7h3.9V508.2h-3.9ZM1365.09,508.2h3.9V538.2h-3.9ZM1370.95,538.2h3.9V549.1h-3.9ZM1376.81,548.5h3.9V572.4h-3.9ZM1388.54,522.8h3.9V550.4h-3.9Z" fill="#25661c"/>
<path d="M73.3,211V226" stroke="#a01828" stroke-width="1"/>
<polyline points="73.0,378.8 80.0,366.2 87.5,352.5 95.0,342.5 102.5,338.0 110.0,336.5 120.0,337.5 130.0,340.5 137.5,337.5 145.0,333.8 155.0,332.0 165.0,326.2 172.5,323.0 177.5,320.5 182.5,321.2 190.0,324.5 197.5,327.0 206.2,331.2 215.0,331.2 222.5,328.8 230.0,324.5 237.5,317.5 245.0,312.5 247.5,311.5 255.0,312.5 265.0,315.0 272.5,317.0 282.5,322.5 290.0,328.8 297.5,336.2 305.0,345.0 312.5,355.0 320.0,363.8 327.5,372.5 335.0,378.8 336.2,380.0 345.0,390.0 355.0,403.8 365.0,415.0 375.0,423.8 385.0,430.0 395.0,437.5 405.0,443.8 412.5,447.5 420.0,448.0 430.0,447.0 441.2,443.8 453.8,448.2 460.0,447.5 470.0,442.5 480.0,436.2 490.0,431.2 500.0,427.5 510.0,424.5 520.0,421.8 530.0,418.8 537.5,417.0 548.8,418.2 550.0,418.8 560.0,418.0 570.0,412.5 580.0,409.5 590.0,407.5 600.0,408.0 612.5,410.8 622.5,413.8 632.5,417.0 642.5,419.2 657.5,419.2 665.0,415.5 675.0,410.8 687.5,406.2 700.0,404.2 712.5,403.8 725.0,402.5 737.5,399.5 750.0,395.8 762.5,393.2 770.0,392.5 777.5,393.2 785.0,395.8 792.5,398.8 802.5,399.5 810.0,398.8 817.5,395.5 825.0,391.8 832.5,387.0 840.0,382.0 847.5,377.5 857.5,373.8 865.0,369.5 875.0,364.5 885.0,358.8 895.0,352.5 902.5,348.8 910.0,346.2 917.5,344.2 925.0,341.8 935.0,340.5 945.0,341.2 955.0,343.0 962.5,345.0 972.5,348.8 982.5,354.5 992.5,361.2 1002.5,368.8 1012.5,377.5 1022.5,384.5 1029.5,388.8 1040.0,392.5 1050.0,400.0 1060.0,408.8 1067.5,415.0 1075.0,420.5 1085.0,423.8 1095.0,426.2 1105.0,427.5 1112.5,427.5 1122.5,423.0 1135.0,418.8 1145.0,416.2 1155.0,410.0 1165.0,408.8 1180.0,406.2 1195.0,405.8 1210.0,405.5 1225.0,405.5 1237.5,408.2 1250.0,411.2 1260.0,413.8 1270.0,418.0 1280.0,420.0 1292.5,422.0 1300.0,426.2 1310.0,432.5 1317.5,441.2 1325.0,448.8 1335.0,456.2 1345.0,463.8 1355.0,470.0 1365.0,477.5 1375.0,487.5 1385.0,497.5 1395.0,508.8 1402.5,516.2" fill="none" stroke="#d8d8d8" stroke-width="1.05" stroke-linejoin="round" />
<polyline points="73.0,247.5 77.0,222.5 82.5,210.0 87.5,200.0 93.8,199.5 102.5,207.5 107.5,208.5 120.0,206.2 135.0,202.5 152.5,201.8 165.0,197.5 177.5,190.5 182.5,196.2 188.8,207.0 195.0,212.5 200.0,218.8 206.2,227.5 220.0,227.0 227.5,227.5 235.0,233.8 242.5,243.8 247.5,253.8 255.0,250.0 265.0,247.5 272.5,246.8 282.5,247.5 290.0,251.2 297.5,260.0 305.0,268.8 312.5,277.0 320.0,279.5 325.0,281.2 330.0,290.0 340.0,293.0 350.0,300.0 360.0,310.0 370.0,320.0 380.0,331.2 390.0,345.0 400.0,362.5 410.0,381.2 417.5,394.5 430.0,390.0 440.0,385.5 447.5,386.2 457.5,391.2 470.0,397.5 476.2,399.2 482.5,393.8 490.0,387.5 500.0,382.5 510.0,378.8 520.0,373.8 530.0,370.5 540.0,367.5 548.8,368.0 550.0,368.8 560.0,369.5 567.5,373.8 577.5,381.2 587.5,383.8 595.0,383.0 605.0,386.2 615.0,387.0 623.8,384.5 632.5,386.2 642.5,390.5 652.5,393.0 660.0,389.5 665.0,382.5 670.0,372.5 677.5,362.5 685.0,356.2 692.5,353.8 705.0,353.0 720.0,352.0 730.0,352.5 740.0,356.2 750.0,359.5 762.5,362.0 775.0,363.0 782.5,368.8 790.0,376.2 797.5,382.5 803.8,385.5 810.0,377.5 817.5,366.2 825.0,353.8 832.5,338.8 840.0,326.2 847.5,320.0 860.0,316.2 867.5,311.2 875.0,307.0 885.0,305.0 895.0,304.5 902.5,307.0 910.0,310.5 917.5,314.5 925.0,317.5 935.0,318.8 945.0,319.5 952.5,323.0 957.5,324.2 965.0,321.2 970.0,317.5 975.0,311.2 980.0,308.0 987.5,307.5 995.0,309.5 1000.0,308.0 1003.8,305.5 1008.8,307.0 1015.0,311.2 1022.5,313.0 1029.5,316.2 1037.5,323.8 1045.0,333.8 1052.5,343.8 1060.0,353.8 1067.5,368.8 1075.0,382.5 1085.0,392.5 1095.0,398.8 1102.5,403.8 1108.8,406.2 1116.2,395.0 1125.0,385.0 1135.0,378.8 1143.8,375.0 1150.0,363.8 1156.2,352.0 1166.2,352.0 1180.0,354.2 1200.0,354.2 1215.0,354.2 1226.2,354.5 1235.0,358.2 1245.0,362.5 1255.0,365.0 1262.5,367.5 1267.5,377.5 1271.2,390.0 1273.8,399.5 1282.5,399.2 1291.2,400.5 1297.5,390.0 1305.0,375.0 1310.0,362.5 1315.0,351.2 1320.0,346.2 1326.2,350.0 1332.5,351.8 1340.0,356.2 1347.5,363.8 1355.0,372.5 1362.5,381.2 1370.0,388.8 1378.8,396.2 1385.0,407.5 1391.2,420.0 1397.5,435.0 1402.5,449.5" fill="none" stroke="#e2e23a" stroke-width="1.05" stroke-linejoin="round" />
<polyline points="73.0,512.5 83.8,518.8 90.0,502.5 95.0,485.0 101.2,470.0 107.5,463.2 115.0,466.2 122.5,471.2 130.8,477.5 137.5,471.2 145.0,466.2 155.0,461.2 165.0,455.0 175.0,450.0 185.0,445.5 195.0,440.8 206.2,435.5 215.0,435.0 223.8,429.5 230.0,420.0 237.5,401.2 243.8,382.5 247.5,370.0 258.8,380.0 270.0,387.0 282.5,395.5 295.0,403.8 301.2,408.0 307.5,417.5 313.8,426.2 320.0,440.0 326.2,453.8 332.5,460.0 338.8,471.2 345.0,486.2 351.2,500.0 357.5,511.2 365.0,520.0 376.2,524.5 387.5,522.0 397.5,518.0 407.5,510.0 417.5,503.0 430.0,502.5 441.2,501.2 453.8,506.2 460.0,502.5 467.5,490.0 472.5,481.2 477.5,475.0 485.0,473.0 495.0,470.5 505.0,470.5 515.0,470.0 525.0,468.0 535.0,466.2 545.0,467.0 548.8,467.5 550.0,467.5 558.8,467.5 565.0,457.5 572.5,445.0 580.0,436.2 587.5,432.0 595.0,430.5 605.0,431.2 612.5,433.8 618.8,438.0 625.0,442.5 632.5,446.2 642.5,446.2 652.5,445.0 660.0,446.2 665.0,449.5 670.0,455.5 677.5,456.2 690.0,455.5 705.0,454.2 720.0,453.0 730.0,451.2 736.2,447.5 745.0,437.5 755.0,430.0 765.0,424.5 772.5,423.8 780.0,425.5 786.2,422.5 793.8,414.5 800.0,413.2 805.0,415.0 812.5,417.5 820.0,423.8 827.5,430.0 835.0,436.2 840.0,438.8 847.5,436.2 857.5,431.2 867.5,427.0 875.0,422.0 885.0,412.5 895.0,400.0 905.0,386.2 912.5,376.2 920.0,367.5 927.5,363.8 935.0,362.5 947.5,363.0 956.2,362.5 962.5,367.5 970.0,378.8 975.0,387.5 982.5,400.0 990.0,408.8 997.5,416.2 1003.8,425.0 1010.0,436.2 1017.5,447.5 1025.0,453.8 1029.5,456.2 1042.5,460.0 1055.0,463.8 1062.5,466.2 1070.0,461.2 1080.0,455.0 1090.0,453.8 1100.0,451.2 1108.8,449.2 1116.2,455.5 1125.0,458.0 1135.0,458.0 1145.0,458.8 1150.0,462.2 1155.6,465.6 1162.2,466.3 1170.6,463.5 1178.1,460.0 1184.7,457.5 1191.3,458.5 1198.8,458.1 1206.3,456.6 1213.8,455.3 1221.3,457.5 1230.7,457.0 1240.1,457.5 1249.4,458.5 1257.9,460.3 1262.6,461.3 1268.2,454.7 1272.0,445.3 1274.8,442.1 1281.3,440.3 1290.7,441.6 1293.5,446.3 1298.2,463.1 1303.8,480.0 1309.5,498.8 1313.2,519.4 1318.9,540.1 1326.4,551.3 1333.9,559.8 1341.4,563.5 1348.9,565.0 1356.4,566.9 1362.0,569.2 1367.6,574.8 1373.3,581.4 1378.9,591.1 1384.5,590.7 1390.2,591.7 1395.8,588.9 1402.3,582.3" fill="none" stroke="#d860b0" stroke-width="1.05" stroke-linejoin="round" />
<text x="169.5" y="237" fill="#f02020" font-size="13.5">超买</text>
<text x="674.5" y="345.5" fill="#f02020" font-size="13.5">超买</text>
<text x="820.5" y="298.5" fill="#f02020" font-size="13.5">超买</text>
<text x="1113.5" y="358.5" fill="#f02020" font-size="13.5">超买</text>
<text x="978.5" y="433.5" fill="#2a8a1e" font-size="13.5">超卖</text>
<path d="M75.5,199.5h7M78.5,196.5l-3,3l3,3" stroke="#e8e8e8" stroke-width="1.2" fill="none"/><text x="86.8" y="202.8" fill="#e8e8e8" font-size="11.9" textLength="48.5" lengthAdjust="spacingAndGlyphs">94883.51</text>
<text x="1249" y="584.8" fill="#e8e8e8" font-size="11.9" textLength="50" lengthAdjust="spacingAndGlyphs">74508.00</text><path d="M1303,580.500h7.500M1307.500,577.500l3,3l-3,3" stroke="#e8e8e8" stroke-width="1.100" fill="none"/>
<polyline points="73.0,644.0 85.0,645.8 93.8,647.5 100.0,654.5 107.5,659.0 117.5,662.0 130.0,663.2 137.5,658.2 147.5,655.0 157.5,649.5 167.5,647.0 177.5,644.0 185.0,643.2 192.5,644.5 200.0,647.0 207.5,652.0 217.5,655.8 227.5,655.8 240.0,655.0 250.0,657.0 262.5,660.0 275.0,662.0 287.5,662.0 300.0,661.5 312.5,663.2 322.5,662.0 330.0,659.5 337.5,657.0 345.0,659.5 355.0,660.8 362.5,657.0 372.5,652.0 382.5,648.2 392.5,646.5 405.0,645.0 412.5,648.2 420.0,647.5 430.0,646.5 440.0,649.0 447.5,653.2 455.0,657.5 462.5,658.2 470.0,655.0 477.5,650.8 487.5,647.0 497.5,645.8 507.5,645.8 520.0,646.5 530.0,649.0 540.0,651.5 546.2,655.0 549.5,656.5 560.0,657.5 565.0,659.0 572.5,656.5 582.5,655.0 592.5,651.5 600.0,651.5 610.0,654.5 617.5,657.8 625.0,659.5 635.0,657.5 642.5,655.8 650.0,652.0 657.5,648.2 665.0,645.8 672.5,644.5 680.0,645.8 687.5,648.2 695.0,652.0 702.5,655.8 712.5,660.0 722.5,661.2 732.5,662.0 740.0,660.8 747.5,657.0 755.0,654.0 765.0,652.0 772.5,650.8 780.0,651.5 787.5,649.5 797.5,646.5 807.5,644.5 817.5,642.8 827.5,642.0 837.5,642.0 845.0,644.0 852.5,649.0 860.0,651.5 867.5,651.5 875.0,650.0 885.0,652.5 892.5,650.8 900.0,649.5 907.5,654.5 915.0,656.5 922.5,653.2 932.5,652.8 945.0,653.2 952.5,652.0 960.0,653.2 967.5,658.2 975.0,662.0 985.0,663.2 995.0,663.2 1005.0,664.0 1012.5,663.2 1020.0,660.8 1029.5,657.8 1040.0,656.2 1050.0,656.5 1057.5,657.0 1065.0,658.8 1072.5,658.2 1080.0,655.0 1090.0,654.0 1100.0,650.8 1110.0,647.5 1120.0,645.2 1130.0,644.5 1137.5,646.5 1145.0,647.0 1152.5,645.8 1157.5,647.0 1162.5,652.0 1170.0,655.8 1180.0,659.5 1190.0,662.0 1200.0,661.2 1210.0,659.5 1220.0,657.0 1230.0,652.8 1240.0,650.8 1250.0,650.8 1257.5,653.2 1265.0,654.0 1272.5,653.8 1282.5,655.8 1292.5,658.2 1302.5,660.0 1312.5,662.0 1320.0,662.0 1327.5,659.5 1337.5,655.8 1347.5,652.0 1355.0,649.5 1362.5,650.8 1370.0,655.0 1377.5,658.2 1385.0,657.5 1392.5,658.2 1402.5,655.8" fill="none" stroke="#d8d8d8" stroke-width="1.0" stroke-linejoin="round" />
<polyline points="73.0,644.5 85.0,645.8 95.0,647.0 102.5,650.8 112.5,655.0 122.5,658.2 132.5,660.8 142.5,659.5 152.5,657.0 162.5,652.8 172.5,650.0 182.5,646.5 192.5,645.8 202.5,647.5 212.5,650.8 225.0,653.2 240.0,654.0 250.0,655.0 262.5,657.5 275.0,660.0 287.5,661.2 300.0,661.5 312.5,662.8 322.5,662.8 332.5,660.8 342.5,659.5 352.5,660.8 362.5,659.5 372.5,655.8 382.5,652.0 392.5,649.0 405.0,647.0 415.0,647.5 425.0,646.5 435.0,647.0 445.0,649.5 455.0,653.2 465.0,655.8 475.0,654.5 485.0,651.5 495.0,649.0 507.5,647.0 520.0,646.5 532.5,648.2 542.5,650.0 549.5,652.0 560.0,655.0 570.0,656.5 582.5,655.2 595.0,653.2 605.0,652.8 615.0,654.5 625.0,657.0 635.0,657.5 645.0,656.5 655.0,652.8 665.0,649.0 675.0,646.5 685.0,647.0 695.0,649.5 705.0,652.8 715.0,656.5 725.0,659.5 735.0,660.8 745.0,659.5 755.0,657.0 765.0,654.5 775.0,653.2 785.0,652.0 795.0,650.0 805.0,648.2 815.0,645.2 825.0,643.8 835.0,642.5 845.0,643.8 852.5,646.2 862.5,649.0 872.5,650.2 885.0,651.5 895.0,650.8 905.0,652.0 915.0,654.5 925.0,652.8 937.5,653.2 950.0,652.8 960.0,653.2 970.0,656.5 980.0,659.5 990.0,661.5 1000.0,663.2 1010.0,663.8 1020.0,662.8 1029.5,660.0 1040.0,658.8 1050.0,657.8 1060.0,657.5 1070.0,658.2 1080.0,657.0 1090.0,655.2 1100.0,653.2 1110.0,650.8 1120.0,648.2 1130.0,646.5 1140.0,647.0 1150.0,646.2 1157.5,647.0 1165.0,649.5 1175.0,653.2 1185.0,657.0 1195.0,659.0 1205.0,660.0 1215.0,659.0 1225.0,657.0 1235.0,654.0 1245.0,652.0 1252.5,651.5 1260.0,652.8 1270.0,653.2 1280.0,654.5 1290.0,656.2 1300.0,657.8 1310.0,659.5 1320.0,661.2 1330.0,660.8 1340.0,658.2 1350.0,655.0 1360.0,652.0 1367.5,653.2 1375.0,655.8 1385.0,657.0 1395.0,657.8 1402.5,656.5" fill="none" stroke="#e2e23a" stroke-width="1.0" stroke-linejoin="round" />
<polyline points="73.0,642.0 82.5,645.8 92.5,647.0 97.5,655.8 102.5,664.5 110.0,670.0 120.0,671.5 128.8,668.2 135.0,659.5 142.5,654.5 148.8,652.0 155.0,643.2 160.0,639.0 165.0,641.5 172.5,638.2 180.0,637.0 185.0,637.5 190.0,641.5 197.5,644.5 202.5,652.0 207.5,658.2 213.8,660.8 218.8,662.5 225.0,659.0 232.5,656.5 240.0,657.0 245.0,656.5 252.5,660.8 260.0,663.2 270.0,665.0 282.5,664.5 295.0,662.0 305.0,664.5 312.5,665.2 320.0,663.2 327.5,658.2 335.0,652.0 340.0,658.2 347.5,661.5 352.5,663.2 360.0,658.2 367.5,652.0 375.0,645.8 382.5,640.8 390.0,639.5 400.0,640.8 407.5,640.8 412.5,648.2 420.0,647.0 427.5,645.0 435.0,647.0 440.0,649.5 445.0,655.8 450.0,663.2 455.0,669.0 462.5,664.5 470.0,657.0 475.0,649.5 482.5,642.0 490.0,640.2 497.5,642.0 505.0,644.5 512.5,645.0 520.0,645.8 527.5,648.2 535.0,653.2 541.2,652.5 546.2,663.2 549.5,665.2 557.5,662.0 563.8,665.2 570.0,658.2 577.5,655.0 585.0,654.5 591.2,647.0 595.0,645.2 600.0,647.0 606.2,654.5 611.2,655.8 617.5,662.0 623.8,665.8 630.0,662.0 636.2,657.0 642.5,653.2 648.8,647.0 655.0,640.0 660.0,637.5 668.8,636.2 675.0,640.8 681.2,645.8 687.5,649.5 695.0,655.8 702.5,662.0 710.0,666.5 717.5,669.5 725.0,669.5 732.5,666.5 740.0,662.0 745.0,654.5 750.0,649.5 756.2,645.8 762.5,646.5 768.8,644.5 775.0,650.8 781.2,647.0 787.5,646.5 793.8,644.5 798.8,640.0 805.0,642.0 811.2,638.8 817.5,637.8 825.0,639.0 832.5,639.5 840.0,641.5 845.0,645.8 851.2,654.0 857.5,658.2 865.0,655.8 872.5,652.5 877.5,650.8 885.0,657.0 891.2,650.0 897.5,648.2 903.8,658.2 910.0,662.0 916.2,660.8 921.2,653.2 927.5,651.2 935.0,653.2 945.0,653.2 951.2,650.0 957.5,652.5 963.8,663.2 970.0,668.2 976.2,670.0 982.5,665.8 990.0,665.8 1000.0,667.0 1010.0,666.5 1017.5,660.8 1025.0,655.8 1029.5,653.2 1037.5,651.2 1045.0,652.5 1051.2,654.5 1056.2,654.5 1062.5,661.2 1067.5,661.2 1075.0,657.0 1080.0,649.0 1086.2,650.8 1092.5,652.0 1098.8,647.0 1105.0,643.2 1110.0,641.5 1116.2,638.2 1126.2,639.0 1132.5,644.5 1138.8,647.0 1145.0,647.5 1151.2,644.5 1156.2,642.5 1160.0,652.0 1165.0,660.8 1172.5,665.8 1180.0,669.0 1190.0,669.5 1197.5,665.0 1205.0,662.0 1212.5,658.2 1220.0,655.8 1226.2,647.0 1232.5,643.2 1240.0,644.5 1247.5,647.0 1252.5,652.0 1257.5,655.8 1262.5,657.0 1268.8,653.2 1276.2,655.8 1282.5,659.5 1290.0,662.5 1297.5,664.0 1305.0,664.5 1312.5,667.0 1318.8,664.5 1325.0,659.5 1332.5,654.5 1340.0,649.5 1347.5,645.0 1355.0,641.5 1361.2,645.8 1366.2,653.2 1372.5,660.8 1378.8,667.0 1385.0,660.8 1391.2,661.5 1397.5,657.0 1402.5,653.2" fill="none" stroke="#d860b0" stroke-width="1.0" stroke-linejoin="round" />
<rect x="73" y="696" width="1" height="54" fill="#7a2c2c"/>
<path d="M75.4,696.0h4V749.8h-4ZM81.3,699.8h4V749.8h-4ZM87.1,703.5h4V749.8h-4ZM93.0,717.2h4V749.8h-4ZM98.8,738.5h4V749.8h-4ZM192.6,729.8h4V749.8h-4ZM198.5,732.2h4V749.8h-4ZM204.4,741.0h4V749.8h-4ZM210.2,744.2h4V749.8h-4ZM409.5,735.2h4V749.8h-4ZM433.0,733.5h4V749.8h-4ZM438.8,734.8h4V749.8h-4ZM444.7,741.5h4V749.8h-4ZM450.6,748.8h4v1.6h-4ZM456.4,748.8h4v1.6h-4ZM462.3,748.8h4v1.6h-4ZM491.6,735.2h4V749.8h-4ZM503.3,736.8h4V749.8h-4ZM509.2,738.5h4V749.8h-4ZM515.1,739.2h4V749.8h-4ZM520.9,740.5h4V749.8h-4ZM526.8,741.5h4V749.8h-4ZM532.6,742.2h4V749.8h-4ZM538.5,743.5h4V749.8h-4ZM591.3,748.8h4v1.6h-4ZM597.1,748.8h4v1.6h-4ZM649.9,748.8h4v1.6h-4ZM679.2,736.0h4V749.8h-4ZM685.0,737.8h4V749.8h-4ZM690.9,742.2h4V749.8h-4ZM696.8,747.2h4V749.8h-4ZM702.6,748.8h4v1.6h-4ZM843.3,737.8h4V749.8h-4ZM849.2,742.2h4V749.8h-4ZM855.0,746.2h4V749.8h-4ZM860.9,747.8h4V749.8h-4ZM878.5,748.8h4v1.6h-4ZM884.4,748.8h4v1.6h-4ZM890.2,748.8h4v1.6h-4ZM896.1,748.8h4v1.6h-4ZM1083.7,748.8h4v1.6h-4ZM1130.6,734.2h4V749.8h-4ZM1136.4,736.0h4V749.8h-4ZM1142.3,738.5h4V749.8h-4ZM1159.9,743.5h4V749.8h-4ZM1165.7,748.8h4v1.6h-4ZM1230.2,748.8h4v1.6h-4ZM1236.1,748.8h4v1.6h-4ZM1241.9,748.8h4v1.6h-4ZM1247.8,748.8h4v1.6h-4ZM1265.4,748.8h4v1.6h-4ZM1271.2,748.8h4v1.6h-4ZM1277.1,748.8h4v1.6h-4ZM1359.2,747.8h4V749.8h-4ZM1400.2,748.8h4v1.6h-4Z" fill="#dc5250"/>
<path d="M104.7,748.8h4v1.6h-4ZM110.6,749.8h4V764.2h-4ZM116.4,749.8h4V776.0h-4ZM122.3,749.8h4V778.5h-4ZM128.2,749.8h4V781.8h-4ZM216.1,749.8h4V754.8h-4ZM222.0,749.8h4V757.2h-4ZM227.8,749.8h4V757.8h-4ZM233.7,749.8h4V758.5h-4ZM239.5,749.8h4V761.0h-4ZM245.4,749.8h4V764.8h-4ZM251.3,749.8h4V768.5h-4ZM257.1,749.8h4V769.8h-4ZM263.0,749.8h4V769.8h-4ZM298.2,749.8h4V762.2h-4ZM304.0,749.8h4V766.0h-4ZM309.9,749.8h4V771.0h-4ZM315.7,749.8h4V776.0h-4ZM339.2,749.8h4V768.5h-4ZM345.1,749.8h4V771.8h-4ZM350.9,749.8h4V773.5h-4ZM374.4,749.8h4V751.8h-4ZM544.4,748.8h4v1.6h-4ZM550.2,749.8h4V752.2h-4ZM556.1,749.8h4V754.8h-4ZM561.9,749.8h4V757.2h-4ZM603.0,748.8h4v1.6h-4ZM608.8,749.8h4V752.8h-4ZM614.7,749.8h4V756.0h-4ZM620.6,749.8h4V759.0h-4ZM626.4,749.8h4V758.5h-4ZM708.5,748.8h4v1.6h-4ZM714.4,749.8h4V754.8h-4ZM720.2,749.8h4V756.0h-4ZM726.1,749.8h4V757.8h-4ZM773.0,749.8h4V754.2h-4ZM790.6,748.8h4v1.6h-4ZM901.9,749.8h4V754.8h-4ZM907.8,749.8h4V756.8h-4ZM913.7,749.8h4V757.2h-4ZM931.3,749.8h4V756.8h-4ZM937.1,749.8h4V757.2h-4ZM954.7,749.8h4V757.2h-4ZM960.6,749.8h4V761.8h-4ZM966.4,749.8h4V763.5h-4ZM972.3,749.8h4V767.2h-4ZM978.1,749.8h4V770.5h-4ZM1001.6,749.8h4V769.2h-4ZM1007.5,749.8h4V769.8h-4ZM1060.2,749.8h4V755.8h-4ZM1171.6,748.8h4v1.6h-4ZM1177.5,749.8h4V754.2h-4ZM1183.3,749.8h4V759.8h-4ZM1189.2,749.8h4V761.5h-4ZM1212.6,749.8h4V756.0h-4ZM1224.4,748.8h4v1.6h-4ZM1253.7,748.8h4v1.6h-4ZM1259.5,749.8h4V752.2h-4ZM1283.0,748.8h4v1.6h-4ZM1288.8,749.8h4V752.2h-4ZM1294.7,749.8h4V757.2h-4ZM1300.6,749.8h4V768.5h-4ZM1306.4,749.8h4V774.8h-4ZM1312.3,749.8h4V782.2h-4ZM1347.5,748.8h4v1.6h-4ZM1365.0,748.8h4v1.6h-4ZM1370.9,749.8h4V755.2h-4ZM1376.8,749.8h4V760.5h-4ZM1388.5,749.8h4V755.5h-4Z" fill="#27ab79"/>
<path d="M158.0,744.8h3V749.2h-3ZM163.8,743.2h3V749.2h-3ZM169.7,739.0h3V749.2h-3ZM175.6,735.2h3V749.2h-3ZM181.4,730.2h3V749.2h-3ZM187.3,729.8h3V749.2h-3ZM380.7,743.2h3V749.2h-3ZM386.6,739.0h3V749.2h-3ZM392.4,737.2h3V749.2h-3ZM398.3,735.2h3V749.2h-3ZM404.2,733.2h3V749.2h-3ZM415.9,735.2h3V749.2h-3ZM421.8,733.2h3V749.2h-3ZM427.6,732.2h3V749.2h-3ZM468.7,748.2h3V749.2h-3ZM474.5,744.0h3V749.2h-3ZM480.4,738.2h3V749.2h-3ZM486.2,735.2h3V749.2h-3ZM498.0,735.2h3V749.2h-3ZM656.2,745.8h3V749.2h-3ZM662.1,741.5h3V749.2h-3ZM668.0,735.8h3V749.2h-3ZM673.8,735.8h3V749.2h-3ZM796.9,748.2h3V749.2h-3ZM802.8,747.8h3V749.2h-3ZM808.6,745.2h3V749.2h-3ZM814.5,743.2h3V749.2h-3ZM820.4,740.8h3V749.2h-3ZM826.2,737.8h3V749.2h-3ZM832.1,735.2h3V749.2h-3ZM838.0,734.8h3V749.2h-3ZM867.3,747.8h3V749.2h-3ZM873.1,747.2h3V749.2h-3ZM1078.3,748.2h3V749.2h-3ZM1090.0,747.8h3V749.2h-3ZM1095.9,745.2h3V749.2h-3ZM1101.8,742.8h3V749.2h-3ZM1107.6,739.8h3V749.2h-3ZM1113.5,735.8h3V749.2h-3ZM1119.3,734.0h3V749.2h-3ZM1125.2,733.2h3V749.2h-3ZM1148.6,735.2h3V749.2h-3ZM1154.5,733.2h3V749.2h-3ZM1353.8,747.2h3V749.2h-3Z" fill="none" stroke="#dc5250" stroke-width="1"/>
<path d="M134.5,750.2h3V768.0h-3ZM140.4,750.2h3V760.5h-3ZM146.2,750.2h3V755.5h-3ZM152.1,750.2h3V754.8h-3ZM269.3,750.2h3V766.8h-3ZM275.2,750.2h3V764.8h-3ZM281.1,750.2h3V763.8h-3ZM286.9,750.2h3V763.0h-3ZM292.8,750.2h3V762.2h-3ZM322.1,750.2h3V773.0h-3ZM328.0,750.2h3V769.2h-3ZM333.8,750.2h3V763.8h-3ZM357.3,750.2h3V769.2h-3ZM363.1,750.2h3V763.8h-3ZM369.0,750.2h3V756.2h-3ZM568.3,750.2h3V753.8h-3ZM574.2,750.2h3V753.0h-3ZM580.0,750.2h3V752.8h-3ZM585.9,750.2h3V752.2h-3ZM632.8,750.2h3V756.2h-3ZM638.7,750.2h3V753.0h-3ZM644.5,750.2h3V751.8h-3ZM732.4,750.2h3V756.8h-3ZM738.3,750.2h3V755.5h-3ZM744.2,750.2h3V754.8h-3ZM750.0,750.2h3V754.2h-3ZM755.9,750.2h3V753.8h-3ZM761.8,750.2h3V753.0h-3ZM767.6,750.2h3V752.8h-3ZM779.3,750.2h3V752.8h-3ZM785.2,750.2h3V751.8h-3ZM920.0,750.2h3V755.5h-3ZM925.9,750.2h3V755.5h-3ZM943.5,750.2h3V756.8h-3ZM949.3,750.2h3V756.8h-3ZM984.5,750.2h3V768.0h-3ZM990.4,750.2h3V766.8h-3ZM996.2,750.2h3V766.8h-3ZM1013.8,750.2h3V768.0h-3ZM1019.7,750.2h3V764.2h-3ZM1025.5,750.2h3V761.2h-3ZM1031.4,750.2h3V758.8h-3ZM1037.3,750.2h3V755.5h-3ZM1043.1,750.2h3V754.8h-3ZM1049.0,750.2h3V753.8h-3ZM1054.9,750.2h3V752.8h-3ZM1066.6,750.2h3V753.8h-3ZM1072.4,750.2h3V751.8h-3ZM1195.5,750.2h3V758.8h-3ZM1201.4,750.2h3V757.5h-3ZM1207.3,750.2h3V754.8h-3ZM1219.0,750.2h3V753.0h-3ZM1318.6,750.2h3V781.2h-3ZM1324.5,750.2h3V775.5h-3ZM1330.4,750.2h3V770.5h-3ZM1336.2,750.2h3V762.2h-3ZM1342.1,750.2h3V754.8h-3ZM1383.1,750.2h3V754.8h-3ZM1394.9,750.2h3V751.8h-3Z" fill="none" stroke="#27ab79" stroke-width="1"/>
<polyline points="73.0,734.8 80.0,727.2 87.5,721.0 93.8,721.0 98.8,727.2 105.0,736.0 112.5,746.0 120.0,756.0 130.0,765.5 136.2,761.0 142.5,757.2 150.0,754.8 157.5,751.0 165.0,748.0 172.5,743.5 180.0,738.5 187.5,733.5 195.0,729.8 200.0,729.2 206.2,733.0 212.5,734.8 218.8,739.8 227.5,741.5 235.0,743.5 245.0,748.5 255.0,754.8 265.0,759.0 275.0,761.0 285.0,762.2 295.0,762.2 302.5,764.8 310.0,771.0 317.5,777.2 325.0,782.2 333.8,781.8 340.0,784.8 347.5,789.8 355.0,793.5 363.8,794.0 370.0,789.8 377.5,784.8 385.0,778.5 392.5,775.5 400.0,772.2 407.5,769.8 415.0,767.2 422.5,763.0 430.0,759.8 440.0,758.0 447.5,759.8 455.0,763.0 465.0,762.2 472.5,759.8 480.0,755.5 490.0,750.5 500.0,746.8 510.0,745.5 520.0,743.5 532.5,742.2 541.2,742.2 546.2,744.8 549.5,746.0 560.0,747.8 570.0,748.5 582.5,749.0 595.0,748.0 605.0,748.5 615.0,751.0 625.0,755.5 635.0,756.5 645.0,754.0 655.0,750.5 662.5,748.0 670.0,741.5 677.5,738.5 685.0,737.2 692.5,738.0 700.0,740.5 710.0,743.5 720.0,746.0 730.0,748.5 740.0,749.0 750.0,749.0 762.5,748.5 775.0,749.2 785.0,749.8 792.5,749.8 800.0,748.0 807.5,745.5 815.0,742.2 822.5,738.5 830.0,735.5 837.5,732.2 845.0,730.2 852.5,733.0 860.0,734.8 867.5,733.5 875.0,732.8 885.0,734.2 895.0,734.8 902.5,735.5 910.0,738.0 917.5,740.5 925.0,739.8 935.0,741.5 945.0,742.2 955.0,743.5 962.5,748.5 970.0,753.5 977.5,758.0 985.0,761.0 992.5,763.0 1000.0,764.8 1007.5,768.5 1015.0,771.0 1022.5,772.2 1029.5,771.8 1040.0,771.0 1050.0,770.5 1060.0,771.0 1070.0,771.5 1080.0,768.0 1090.0,766.5 1100.0,764.0 1107.5,761.0 1115.0,756.0 1122.5,752.2 1130.0,750.5 1137.5,749.2 1145.0,747.2 1151.2,743.0 1156.2,740.5 1161.2,744.8 1167.5,747.2 1175.0,748.5 1182.5,750.5 1190.0,753.0 1197.5,756.5 1202.5,758.5 1207.5,755.5 1215.0,756.0 1225.0,755.5 1235.0,754.2 1245.0,753.5 1255.0,754.0 1265.0,754.2 1275.0,754.0 1285.0,754.2 1291.2,755.5 1297.5,762.2 1305.0,769.8 1312.5,778.5 1320.0,784.8 1332.5,784.8 1340.0,781.0 1347.5,776.0 1355.0,773.5 1362.5,773.5 1370.0,777.2 1378.8,783.0 1385.0,780.5 1392.5,780.5 1398.8,779.0 1402.5,777.2" fill="none" stroke="#d8d8d8" stroke-width="1.0" stroke-linejoin="round" />
<polyline points="73.0,762.2 80.0,752.2 87.5,744.8 95.0,739.0 102.5,736.8 110.0,738.5 120.0,743.5 130.0,749.0 140.0,752.2 150.0,754.0 157.5,753.0 167.5,750.5 177.5,747.2 187.5,743.5 197.5,739.8 205.0,737.2 215.0,737.2 225.0,738.5 235.0,740.2 245.0,743.0 255.0,746.8 265.0,750.5 275.0,754.0 285.0,757.2 295.0,759.8 305.0,762.2 315.0,766.0 325.0,770.5 335.0,774.8 345.0,779.2 355.0,783.5 365.0,786.5 375.0,787.8 385.0,786.0 395.0,783.0 405.0,779.8 415.0,776.0 425.0,772.2 435.0,768.5 445.0,765.2 455.0,763.0 465.0,763.0 475.0,762.2 485.0,759.8 495.0,756.0 505.0,752.8 515.0,750.2 525.0,748.5 535.0,746.8 545.0,745.5 549.5,745.5 560.0,746.8 570.0,747.8 582.5,748.5 595.0,748.5 605.0,748.5 615.0,749.8 625.0,751.5 635.0,753.0 645.0,753.0 655.0,751.8 662.5,750.5 670.0,748.5 677.5,745.5 685.0,743.5 692.5,742.2 700.0,742.2 710.0,742.2 720.0,743.5 730.0,745.2 740.0,746.5 750.0,747.8 762.5,748.0 775.0,748.5 785.0,749.2 792.5,749.2 800.0,749.0 807.5,748.0 815.0,746.0 822.5,743.5 830.0,741.0 837.5,738.5 845.0,736.8 852.5,735.5 860.0,734.2 867.5,734.2 875.0,734.0 885.0,734.2 895.0,734.2 902.5,734.8 910.0,735.5 917.5,736.8 925.0,737.8 935.0,739.0 945.0,740.2 955.0,741.5 962.5,743.5 970.0,746.8 977.5,749.8 985.0,752.2 992.5,754.8 1000.0,757.2 1007.5,759.8 1015.0,763.0 1022.5,765.5 1029.5,767.2 1040.0,768.0 1050.0,769.2 1060.0,770.5 1070.0,771.0 1080.0,769.8 1090.0,769.0 1100.0,768.0 1107.5,766.0 1115.0,763.5 1122.5,761.0 1130.0,758.5 1137.5,756.0 1145.0,754.0 1151.2,751.5 1157.5,749.8 1165.0,748.5 1175.0,748.5 1182.5,749.0 1190.0,750.5 1197.5,752.2 1205.0,753.5 1215.0,754.8 1225.0,755.2 1235.0,754.8 1245.0,754.2 1255.0,754.0 1265.0,754.2 1275.0,754.2 1285.0,754.2 1292.5,754.8 1300.0,756.5 1307.5,760.5 1315.0,764.8 1322.5,769.8 1330.0,773.5 1337.5,775.5 1345.0,777.2 1352.5,776.0 1360.0,775.2 1367.5,775.5 1375.0,776.8 1382.5,778.0 1390.0,778.5 1397.5,778.5 1402.5,778.0" fill="none" stroke="#e2e23a" stroke-width="1.0" stroke-linejoin="round" />
<polyline points="73.6,855.5 79.3,858.8 84.3,859.2 90.1,858.0 95.6,865.0 101.8,873.0 107.6,873.0 113.1,876.8 119.1,878.5 124.8,876.8 130.8,878.5 136.6,868.0 142.6,869.2 148.3,870.0 154.3,868.0 160.1,864.2 166.1,866.8 171.8,864.2 177.6,863.0 183.6,861.8 189.3,862.2 195.3,862.5 201.1,863.5 207.1,868.0 212.8,865.5 218.8,870.5 224.6,868.0 230.6,866.2 236.3,868.0 242.3,870.0 248.1,871.2 254.1,872.5 259.9,872.2 265.9,872.5 271.6,871.8 277.6,872.2 283.4,872.5 289.4,872.5 295.1,873.0 301.1,876.8 306.9,879.2 312.9,880.5 318.6,883.8 324.6,879.2 330.4,877.5 336.4,874.2 342.1,881.8 348.1,883.5 353.9,884.8 359.9,881.2 365.6,878.0 371.4,874.2 377.4,874.8 383.1,870.5 389.1,872.2 394.9,873.0 400.6,872.2 406.6,871.0 412.4,874.2 418.4,871.2 424.1,869.2 430.1,869.2 435.9,870.0 441.6,871.0 447.6,876.2 453.4,878.0 459.4,875.0 465.1,872.2 471.1,871.2 476.9,868.5 482.9,865.0 488.6,865.5 494.4,867.2 500.4,865.0 506.1,866.8 512.1,866.2 517.9,866.0 523.9,866.0 529.6,866.0 535.6,866.0 541.4,866.2 547.4,873.0 552.4,869.2 558.1,870.0 564.1,871.2 569.9,866.2 575.9,867.5 581.6,868.0 587.6,868.0 593.4,865.0 599.4,866.8 605.1,869.8 610.9,870.0 616.9,872.2 622.6,875.0 628.6,872.5 634.4,871.0 640.4,869.8 646.1,868.5 652.1,865.5 657.9,862.5 663.6,860.0 669.6,856.2 675.4,859.8 681.4,860.5 687.1,861.8 693.1,865.0 698.9,867.2 704.9,867.5 710.6,866.2 716.4,868.5 722.4,868.0 728.1,870.0 734.1,868.5 739.9,867.5 745.9,866.8 751.6,865.5 757.6,866.0 763.4,867.2 769.1,867.2 775.1,869.2 780.9,866.0 786.9,865.5 792.6,863.5 798.6,860.5 804.4,862.2 810.1,858.0 816.1,856.0 821.9,854.2 827.9,851.8 833.6,849.2 839.6,849.2 845.4,855.0 851.4,860.5 857.1,861.2 862.9,858.0 868.9,856.0 874.6,855.0 880.6,858.8 886.4,860.5 892.4,856.8 898.1,858.0 904.1,862.5 909.9,864.2 915.6,862.5 921.6,860.0 927.4,861.8 933.4,863.0 939.1,863.5 945.1,863.5 950.9,863.0 956.6,865.5 962.6,872.5 968.4,872.5 974.4,876.8 980.1,878.5 986.1,875.0 991.9,876.0 997.9,878.0 1003.6,883.5 1009.4,882.5 1015.4,880.0 1021.1,879.2 1027.1,878.0 1032.8,878.5 1038.8,878.5 1044.6,880.0 1050.6,880.5 1056.3,881.8 1062.3,884.8 1068.1,881.8 1073.8,879.2 1079.8,871.8 1085.6,876.0 1091.6,875.5 1097.3,873.0 1103.3,871.0 1109.1,868.5 1115.1,862.5 1120.8,863.5 1126.6,863.0 1132.6,866.0 1138.3,866.2 1144.3,865.5 1150.1,856.2 1156.1,856.0 1161.8,874.2 1167.8,871.2 1173.6,871.0 1179.3,872.5 1185.3,875.0 1191.1,875.0 1197.1,870.5 1202.8,871.2 1208.8,868.0 1214.6,872.2 1220.6,871.0 1226.3,866.8 1232.1,867.2 1238.1,868.0 1243.8,868.8 1249.8,869.2 1255.6,872.5 1261.6,871.8 1267.3,868.0 1273.1,869.2 1279.1,871.0 1284.8,872.2 1290.8,873.0 1296.6,882.2 1302.6,884.8 1308.3,887.2 1314.3,892.5 1320.1,887.2 1326.1,880.0 1331.8,880.0 1337.6,877.5 1343.6,874.2 1349.3,875.0 1355.3,873.8 1361.1,878.0 1367.1,881.2 1372.8,883.0 1378.8,885.5 1384.6,876.0 1390.3,879.2 1396.3,876.8 1402.1,875.0" fill="none" stroke="#d860b0" stroke-width="1.0" stroke-linejoin="round" />
<polyline points="73.6,838.0 79.3,846.8 84.3,848.0 90.1,847.5 95.6,861.8 101.8,877.5 107.6,874.2 113.1,880.0 119.1,882.5 124.8,879.2 130.8,881.8 136.6,863.5 142.6,866.8 148.3,868.8 154.3,865.0 160.1,858.8 166.1,864.2 171.8,860.5 177.6,858.0 183.6,855.5 189.3,856.0 195.3,856.2 201.1,858.0 207.1,868.0 212.8,863.5 218.8,874.2 224.6,869.2 230.6,866.2 236.3,868.8 242.3,872.5 248.1,875.5 254.1,878.5 259.9,876.8 265.9,877.5 271.6,875.0 277.6,875.5 283.4,875.5 289.4,876.2 295.1,877.5 301.1,884.2 306.9,890.5 312.9,892.5 318.6,897.5 324.6,887.5 330.4,885.0 336.4,877.5 342.1,889.2 348.1,891.8 353.9,893.5 359.9,886.8 365.6,880.0 371.4,873.8 377.4,875.0 383.1,867.2 389.1,866.8 394.9,871.2 400.6,870.0 406.6,867.5 412.4,873.5 418.4,867.5 424.1,863.5 430.1,863.5 435.9,865.5 441.6,866.8 447.6,878.0 453.4,881.2 459.4,875.5 465.1,870.5 471.1,868.8 476.9,863.0 482.9,855.5 488.6,857.5 494.4,861.2 500.4,858.0 506.1,863.5 512.1,861.2 517.9,860.5 523.9,860.5 529.6,860.5 535.6,860.5 541.4,861.0 547.4,876.8 552.4,870.5 558.1,871.8 564.1,874.8 569.9,864.2 575.9,866.0 581.6,866.8 587.6,866.0 593.4,858.8 599.4,863.0 605.1,871.0 610.9,871.8 616.9,876.8 622.6,883.0 628.6,875.0 634.4,871.0 640.4,868.5 646.1,866.8 652.1,860.5 657.9,855.0 663.6,850.5 669.6,843.5 675.4,852.5 681.4,854.2 687.1,857.5 693.1,864.2 698.9,869.2 704.9,869.2 710.6,866.8 716.4,871.0 722.4,870.0 728.1,874.2 734.1,870.5 739.9,868.8 745.9,866.8 751.6,865.5 757.6,866.2 763.4,868.8 769.1,868.0 775.1,872.5 780.9,866.0 786.9,865.0 792.6,859.2 798.6,853.0 804.4,857.5 810.1,846.2 816.1,842.5 821.9,838.8 827.9,835.5 833.6,832.2 839.6,835.5 845.4,848.8 851.4,860.5 857.1,861.8 862.9,854.2 868.9,851.0 874.6,848.0 880.6,857.5 886.4,860.5 892.4,851.8 898.1,854.2 904.1,866.8 909.9,870.0 915.6,866.2 921.6,859.2 927.4,863.0 933.4,866.8 939.1,866.8 945.1,865.5 950.9,863.0 956.6,869.2 962.6,883.8 968.4,883.0 974.4,890.5 980.1,892.5 986.1,883.0 991.9,885.5 997.9,889.2 1003.6,895.5 1009.4,894.2 1015.4,890.0 1021.1,890.5 1027.1,884.2 1032.8,884.2 1038.8,884.2 1044.6,887.5 1050.6,888.5 1056.3,890.5 1062.3,896.0 1068.1,890.0 1073.8,884.2 1079.8,868.8 1085.6,877.5 1091.6,876.2 1097.3,871.8 1103.3,866.8 1109.1,862.5 1115.1,851.8 1120.8,854.2 1126.6,853.0 1132.6,859.2 1138.3,862.5 1144.3,860.5 1150.1,845.0 1156.1,844.2 1161.8,878.5 1167.8,873.0 1173.6,872.5 1179.3,875.5 1185.3,879.8 1191.1,879.8 1197.1,870.5 1202.8,872.2 1208.8,866.0 1214.6,873.8 1220.6,871.8 1226.3,864.2 1232.1,865.0 1238.1,866.8 1243.8,868.0 1249.8,868.8 1255.6,875.0 1261.6,872.5 1267.3,866.8 1273.1,869.2 1279.1,871.8 1284.8,873.8 1290.8,875.5 1296.6,892.5 1302.6,895.5 1308.3,898.0 1314.3,904.2 1320.1,893.0 1326.1,880.0 1331.8,880.5 1337.6,876.0 1343.6,871.8 1349.3,873.0 1355.3,870.5 1361.1,878.0 1367.1,884.2 1372.8,886.8 1378.8,891.0 1384.6,874.2 1390.3,879.2 1396.3,874.8 1402.1,872.5" fill="none" stroke="#e2e23a" stroke-width="1.0" stroke-linejoin="round" />
<polyline points="73.6,821.8 79.3,839.2 84.3,842.5 90.1,841.8 95.6,865.5 101.8,889.2 107.6,885.5 113.1,893.5 119.1,895.5 124.8,888.5 130.8,892.5 136.6,858.0 142.6,863.5 148.3,866.8 154.3,860.5 160.1,849.2 166.1,860.5 171.8,853.5 177.6,849.2 183.6,845.0 189.3,847.2 195.3,847.5 201.1,856.8 207.1,878.5 212.8,865.5 218.8,884.2 224.6,873.0 230.6,868.8 236.3,873.0 242.3,879.2 248.1,885.0 254.1,890.5 259.9,886.8 265.9,888.5 271.6,880.0 277.6,881.8 283.4,882.5 289.4,884.2 295.1,886.8 301.1,898.0 306.9,908.0 312.9,911.0 318.6,915.0 324.6,891.8 330.4,884.2 336.4,870.5 342.1,893.0 348.1,897.5 353.9,899.2 359.9,886.8 365.6,875.5 371.4,864.2 377.4,866.8 383.1,853.5 389.1,855.0 394.9,865.5 400.6,861.8 406.6,856.8 412.4,873.0 418.4,858.0 424.1,852.2 430.1,854.2 435.9,861.8 441.6,864.2 447.6,887.5 453.4,893.5 459.4,879.2 465.1,868.0 471.1,864.2 476.9,853.0 482.9,841.2 488.6,844.2 494.4,855.0 500.4,849.2 506.1,860.5 512.1,857.5 517.9,855.0 523.9,855.0 529.6,854.2 535.6,855.5 541.4,858.0 547.4,894.2 552.4,874.2 558.1,878.0 564.1,885.5 569.9,863.5 575.9,866.0 581.6,866.8 587.6,866.8 593.4,848.5 599.4,860.0 605.1,877.5 610.9,877.5 616.9,886.8 622.6,897.5 628.6,878.0 634.4,870.5 640.4,865.5 646.1,863.5 652.1,851.8 657.9,841.8 663.6,835.5 669.6,827.5 675.4,847.5 681.4,851.0 687.1,856.0 693.1,869.2 698.9,878.5 704.9,877.5 710.6,871.8 716.4,880.5 722.4,878.0 728.1,886.8 734.1,875.5 739.9,871.0 745.9,867.5 751.6,865.0 757.6,866.8 763.4,872.5 769.1,870.0 775.1,883.5 780.9,865.0 786.9,863.0 792.6,850.5 798.6,837.5 804.4,846.8 810.1,831.8 816.1,828.0 821.9,825.0 827.9,821.2 833.6,819.8 839.6,824.2 845.4,848.0 851.4,870.5 857.1,872.2 862.9,856.0 868.9,850.5 874.6,845.5 880.6,863.5 886.4,869.2 892.4,852.5 898.1,856.8 904.1,878.5 909.9,880.5 915.6,872.5 921.6,860.0 927.4,866.8 933.4,873.0 939.1,873.0 945.1,870.0 950.9,865.5 956.6,874.2 962.6,899.2 968.4,898.0 974.4,907.5 980.1,908.0 986.1,889.2 991.9,892.5 997.9,897.5 1003.6,907.5 1009.4,904.2 1015.4,894.2 1021.1,895.5 1027.1,881.8 1032.8,881.2 1038.8,880.5 1044.6,887.5 1050.6,891.8 1056.3,895.5 1062.3,906.2 1068.1,894.2 1073.8,884.2 1079.8,852.5 1085.6,872.5 1091.6,870.5 1097.3,861.8 1103.3,852.5 1109.1,845.5 1115.1,834.2 1120.8,843.0 1126.6,841.0 1132.6,856.8 1138.3,859.2 1144.3,856.0 1150.1,833.0 1156.1,832.2 1161.8,886.0 1167.8,876.8 1173.6,876.8 1179.3,881.8 1185.3,888.0 1191.1,888.0 1197.1,870.5 1202.8,873.0 1208.8,860.5 1214.6,875.5 1220.6,871.8 1226.3,859.2 1232.1,860.0 1238.1,865.0 1243.8,866.8 1249.8,868.0 1255.6,882.5 1261.6,876.8 1267.3,862.5 1273.1,868.0 1279.1,874.2 1284.8,878.0 1290.8,883.0 1296.6,908.0 1302.6,911.0 1308.3,914.2 1314.3,917.5 1320.1,895.5 1326.1,875.5 1331.8,878.0 1337.6,868.0 1343.6,861.8 1349.3,865.5 1355.3,860.5 1361.1,876.8 1367.1,888.5 1372.8,891.8 1378.8,898.5 1384.6,869.8 1390.3,879.2 1396.3,871.0 1402.1,866.2" fill="none" stroke="#d8d8d8" stroke-width="1.0" stroke-linejoin="round" />
<text x="1806" y="182.9" fill="#8a8f99" font-size="12">96000.00</text>
<line x1="1797" y1="179.5" x2="1802" y2="179.5" stroke="#2a2c30"/>
<text x="1806" y="220.4" fill="#8a8f99" font-size="12">94000.00</text>
<line x1="1797" y1="216.5" x2="1802" y2="216.5" stroke="#2a2c30"/>
<text x="1806" y="258.0" fill="#8a8f99" font-size="12">92000.00</text>
<line x1="1797" y1="254.5" x2="1802" y2="254.5" stroke="#2a2c30"/>
<text x="1806" y="295.5" fill="#8a8f99" font-size="12">90000.00</text>
<line x1="1797" y1="291.5" x2="1802" y2="291.5" stroke="#2a2c30"/>
<text x="1806" y="333.1" fill="#8a8f99" font-size="12">88000.00</text>
<line x1="1797" y1="329.5" x2="1802" y2="329.5" stroke="#2a2c30"/>
<text x="1806" y="370.6" fill="#8a8f99" font-size="12">86000.00</text>
<line x1="1797" y1="366.5" x2="1802" y2="366.5" stroke="#2a2c30"/>
<text x="1806" y="408.1" fill="#8a8f99" font-size="12">84000.00</text>
<line x1="1797" y1="404.5" x2="1802" y2="404.5" stroke="#2a2c30"/>
<text x="1806" y="445.7" fill="#8a8f99" font-size="12">82000.00</text>
<line x1="1797" y1="441.5" x2="1802" y2="441.5" stroke="#2a2c30"/>
<text x="1806" y="483.2" fill="#8a8f99" font-size="12">80000.00</text>
<line x1="1797" y1="479.5" x2="1802" y2="479.5" stroke="#2a2c30"/>
<text x="1806" y="558.3" fill="#8a8f99" font-size="12">76000.00</text>
<line x1="1797" y1="554.5" x2="1802" y2="554.5" stroke="#2a2c30"/>
<text x="1806" y="595.8" fill="#8a8f99" font-size="12">74000.00</text>
<line x1="1797" y1="592.5" x2="1802" y2="592.5" stroke="#2a2c30"/>
<text x="1831" y="671.3" fill="#8a8f99" font-size="12" text-anchor="middle">0.00</text>
<line x1="1797" y1="667" x2="1802" y2="667" stroke="#2a2c30"/>
<text x="1831" y="713.3" fill="#8a8f99" font-size="12" text-anchor="middle">2000.00</text>
<line x1="1797" y1="709" x2="1802" y2="709" stroke="#2a2c30"/>
<text x="1831" y="754.3" fill="#8a8f99" font-size="12" text-anchor="middle">0.00</text>
<line x1="1797" y1="750" x2="1802" y2="750" stroke="#2a2c30"/>
<text x="1831" y="795.3" fill="#8a8f99" font-size="12" text-anchor="middle">-2000.00</text>
<line x1="1797" y1="791" x2="1802" y2="791" stroke="#2a2c30"/>
<text x="1831" y="815.3" fill="#8a8f99" font-size="12" text-anchor="middle">100.00</text>
<line x1="1797" y1="811" x2="1802" y2="811" stroke="#2a2c30"/>
<text x="1831" y="849.3" fill="#8a8f99" font-size="12" text-anchor="middle">70.00</text>
<line x1="1797" y1="845" x2="1802" y2="845" stroke="#2a2c30"/>
<text x="1831" y="871.3" fill="#8a8f99" font-size="12" text-anchor="middle">50.00</text>
<line x1="1797" y1="867" x2="1802" y2="867" stroke="#2a2c30"/>
<text x="1831" y="894.3" fill="#8a8f99" font-size="12" text-anchor="middle">30.00</text>
<line x1="1797" y1="890" x2="1802" y2="890" stroke="#2a2c30"/>
<rect x="1797" y="511" width="69" height="21" fill="#d9182b"/>
<line x1="1797" y1="522" x2="1802" y2="522" stroke="#fff"/>
<text x="1805" y="526" fill="#fff" font-size="12" font-weight="bold">77748.00</text>
<text x="206.8" y="937.3" fill="#8a8f99" font-size="12" text-anchor="middle">3月 7</text>
<text x="311.8" y="937.3" fill="#8a8f99" font-size="12" text-anchor="middle">3月 10</text>
<text x="417.8" y="937.3" fill="#8a8f99" font-size="12" text-anchor="middle">3月 13</text>
<text x="522.8" y="937.3" fill="#8a8f99" font-size="12" text-anchor="middle">3月 16</text>
<text x="628.8" y="937.3" fill="#8a8f99" font-size="12" text-anchor="middle">3月 19</text>
<text x="733.8" y="937.3" fill="#8a8f99" font-size="12" text-anchor="middle">3月 22</text>
<text x="839.8" y="937.3" fill="#8a8f99" font-size="12" text-anchor="middle">3月 25</text>
<text x="944.8" y="937.3" fill="#8a8f99" font-size="12" text-anchor="middle">3月 28</text>
<text x="1050.8" y="937.3" fill="#8a8f99" font-size="12" text-anchor="middle">3月 31</text>
<text x="1156.8" y="937.3" fill="#8a8f99" font-size="12" text-anchor="middle">4月 3</text>
<text x="1261.8" y="937.3" fill="#8a8f99" font-size="12" text-anchor="middle">4月 6</text>
<text x="1367.8" y="937.3" fill="#8a8f99" font-size="12" text-anchor="middle">4月 9</text>
<text x="1472.8" y="937.3" fill="#8a8f99" font-size="12" text-anchor="middle">4月 12</text>
<text x="1578.8" y="937.3" fill="#8a8f99" font-size="12" text-anchor="middle">4月 15</text>
<text x="1683.8" y="937.3" fill="#8a8f99" font-size="12" text-anchor="middle">4月 18</text>
<text x="1789.8" y="937.3" fill="#8a8f99" font-size="12" text-anchor="middle">4月 21</text>
<text x="1828" y="937" fill="#8a8f99" font-size="12">筹</text><text x="1850" y="937" fill="#8a8f99" font-size="12">爆</text>
<text x="103.2" y="629" fill="#7a7f88" font-size="12" textLength="54.5" lengthAdjust="spacingAndGlyphs">KDJ(9,3,3)</text><text x="184.5" y="629" fill="#e6e6e6" font-size="12" font-weight="bold" textLength="40.0" lengthAdjust="spacingAndGlyphs">K:42.36</text><text x="230.8" y="629" fill="#e6e63c" font-size="12" font-weight="bold" textLength="40.39999999999998" lengthAdjust="spacingAndGlyphs">D:38.53</text><text x="277.5" y="629" fill="#d65aa8" font-size="12" font-weight="normal" textLength="38.69999999999999" lengthAdjust="spacingAndGlyphs">J:50.01</text>
<text x="103.2" y="689" fill="#7a7f88" font-size="12" textLength="79.8" lengthAdjust="spacingAndGlyphs">MACD(12,26,9)</text><text x="210" y="689" fill="#e6e6e6" font-size="12" font-weight="bold" textLength="65.5" lengthAdjust="spacingAndGlyphs">DIF:-1290.01</text><text x="283.8" y="689" fill="#e6e63c" font-size="12" font-weight="bold" textLength="71.19999999999999" lengthAdjust="spacingAndGlyphs">DEA:-1350.37</text><text x="362" y="689" fill="#e05a58" font-size="12" font-weight="normal" textLength="73" lengthAdjust="spacingAndGlyphs">MACD:120.72</text>
<text x="103.2" y="812" fill="#7a7f88" font-size="12" textLength="63.8" lengthAdjust="spacingAndGlyphs">RSI(6,12,24)</text><text x="193.8" y="812" fill="#e6e6e6" font-size="12" font-weight="bold" textLength="56.69999999999999" lengthAdjust="spacingAndGlyphs">RSI1:51.58</text><text x="257.5" y="812" fill="#e6e63c" font-size="12" font-weight="bold" textLength="56.30000000000001" lengthAdjust="spacingAndGlyphs">RSI2:46.03</text><text x="320.8" y="812" fill="#d65aa8" font-size="12" font-weight="normal" textLength="56.19999999999999" lengthAdjust="spacingAndGlyphs">RSI3:43.96</text>
<path d="M167,623h8l-4,4.5Z" fill="#9a9fa8"/>
<path d="M90,628h10M91.5,628v-4a3.5,3.5 0 0 1 7,0v4M94,630h2" stroke="#7a7f88" fill="none" stroke-width="1"/>
<path d="M192,683h8l-4,4.5Z" fill="#9a9fa8"/>
<path d="M90,688h10M91.5,688v-4a3.5,3.5 0 0 1 7,0v4M94,690h2" stroke="#7a7f88" fill="none" stroke-width="1"/>
<path d="M176,806h8l-4,4.5Z" fill="#9a9fa8"/>
<path d="M90,811h10M91.5,811v-4a3.5,3.5 0 0 1 7,0v4M94,813h2" stroke="#7a7f88" fill="none" stroke-width="1"/>
<circle cx="91" cy="152" r="7" fill="none" stroke="#4a4a4a" stroke-width="1"/><path d="M89.5,148.5l3.5,3.5l-3.5,3.5" stroke="#5a5a5a" fill="none" stroke-width="1.2"/>
<circle cx="91" cy="170" r="7" fill="none" stroke="#4a4a4a" stroke-width="1"/><path d="M89.5,166.5l3.5,3.5l-3.5,3.5" stroke="#5a5a5a" fill="none" stroke-width="1.2"/>
</svg>
<svg class="i" style="left:88px;top:955px" width="14" height="14"><rect x="0.7" y="2" width="12.6" height="11.3" fill="none" stroke="#d4d7dc" stroke-width="1.2"/><path d="M0.7,5.5h12.6M4,0v3.5M10,0v3.5" stroke="#d4d7dc" stroke-width="1.2"/><path d="M4,9.5l2,2l4,-4" fill="none" stroke="#d4d7dc" stroke-width="1.1"/></svg>
<span class="t " style="left:110.7px;top:952px;font-size:13.5px;color:#f0f0f0;font-weight:bold;letter-spacing:-0.244px">定位到...</span>
<div class="a" style="left:174px;top:956px;width:1px;height:12px;background:#2a2c30"></div>
<span class="t " style="left:186px;top:952px;font-size:13px;color:#6a6f78;letter-spacing:0.100px">MA</span>
<span class="t " style="left:218px;top:952px;font-size:13px;color:#6a6f78;letter-spacing:-0.291px">EMA</span>
<span class="t b" style="left:257px;top:952px;font-size:13px;;letter-spacing:-0.487px">BOLL</span>
<div class="a" style="left:312px;top:956px;width:1px;height:12px;background:#2a2c30"></div>
<span class="t b" style="left:324px;top:952px;font-size:13px;;letter-spacing:-0.145px">MACD</span>
<span class="t b" style="left:373px;top:952px;font-size:13px;;letter-spacing:-0.791px">RSI</span>
<span class="t b" style="left:404px;top:952px;font-size:13px;;letter-spacing:-0.087px">KDJ</span>
<svg class="i" style="left:449px;top:957px" width="11" height="11"><path d="M5,1h-4v9h9v-4" fill="none" stroke="#7a7f88" stroke-width="1.2"/><path d="M5,6l5,-5M7,0.6h3.4v3.4" fill="none" stroke="#7a7f88" stroke-width="1.1"/></svg>
<span class="t b" style="left:469px;top:952px;font-size:13.4px;font-weight:bold">社区指标</span>
<span class="t " style="left:1766px;top:952px;font-size:13px;color:#858a94">对数</span>
<span class="t " style="left:1809px;top:952px;font-size:11px;color:#858a94">%</span>
<span class="t b" style="left:1833px;top:952px;font-size:13.5px;">自动</span>
<div class="a" style="left:951px;top:974px;width:38px;height:8px;background:#3a3c40;border-radius:2px"></div>
<svg class="i" style="left:966px;top:976px" width="8" height="4"><path d="M0,4l4,-4l4,4z" fill="#b0b4ba"/></svg>
<div class="a" style="left:73px;top:984px;width:81px;height:28px;background:#1a1c20"></div>
<div class="a" style="left:73px;top:982px;width:81px;height:2px;background:#2b8cf0"></div>
<span class="t b" style="left:91.7px;top:988px;font-size:13.9px;">委单区</span>
<span class="t " style="left:174.3px;top:988px;font-size:14px;color:#e0e2e6;letter-spacing:0.329px">自定义指标/回测/实盘</span>
<span class="t " style="left:351.7px;top:988px;font-size:14px;color:#e0e2e6;letter-spacing:-0.025px">AI 网格</span>
<span class="t " style="left:436px;top:988px;font-size:14px;color:#e0e2e6;letter-spacing:-0.372px">现货DCA</span>
<span class="t " style="left:546.7px;top:988px;font-size:14px;color:#e0e2e6;letter-spacing:-0.187px">小AI分析</span>
<svg class="i" style="left:1822px;top:993px" width="12" height="8"><path d="M1,7l5,-5l5,5" fill="none" stroke="#9a9fa8" stroke-width="1.3"/></svg>
<svg class="i" style="left:1846px;top:990px" width="15" height="15"><rect x="0.7" y="0.7" width="13.6" height="13.6" rx="1.5" fill="none" stroke="#7a7f88" stroke-width="1.2"/><path d="M4,7v-3h3M11,8v3h-3" fill="none" stroke="#7a7f88" stroke-width="1"/></svg>
<span class="t " style="left:78px;top:1020.3px;font-size:13px;color:#e0e2e6;letter-spacing:-0.282px">资产(₮)</span>
<div class="a" style="left:129px;top:1019.5px;width:123.500px;height:23px;background:#0d1a29;border-radius:2px"></div>
<span class="t b" style="left:152.5px;top:1020.3px;font-size:13px;">实时资产风控</span>
<svg class="i" style="left:285px;top:1023px" width="14" height="14"><path d="M1.5,10l7,-7.5l2.5,2.3l-7,7.5l-3,0.7z" fill="#9a9fa8"/><path d="M8,13h5.5" stroke="#9a9fa8" stroke-width="1.6"/></svg>
<span class="t " style="left:321.7px;top:1020.3px;font-size:13px;color:#e0e2e6;letter-spacing:-0.428px">OKX-BTC多空持仓人数比</span>
<span class="t " style="left:475px;top:1020.3px;font-size:13px;color:#21a67a;letter-spacing:-0.004px">主力看空</span>
<span class="t " style="left:537px;top:1020.3px;font-size:13px;color:#e0e2e6;letter-spacing:-0.078px">2.00</span>
<span class="t " style="left:596.2px;top:1020.3px;font-size:13px;color:#e0e2e6;letter-spacing:-0.293px">纳斯达克指数期货CFD</span>
<span class="t " style="left:735px;top:1020.3px;font-size:13px;color:#e8454a;letter-spacing:-0.542px">+2.97%</span>
<span class="t " style="left:787px;top:1020.3px;font-size:13px;color:#e0e2e6;letter-spacing:-0.088px">17,481.400</span>
<span class="t " style="left:885px;top:1020.3px;font-size:13px;color:#e0e2e6;letter-spacing:-0.072px">伦敦金</span>
<span class="t " style="left:934.5px;top:1020.3px;font-size:13px;color:#e8454a;letter-spacing:-0.459px">+3.71%</span>
<span class="t " style="left:986.2px;top:1020.3px;font-size:13px;color:#e0e2e6;letter-spacing:-0.139px">3,089.13</span>
<span class="t " style="left:1070px;top:1020.3px;font-size:13px;color:#e0e2e6;letter-spacing:-0.597px">USDT 场外-OKX</span>
<span class="t " style="left:1170px;top:1020.3px;font-size:13px;color:#e8454a;letter-spacing:-0.320px">溢价 +0.13%</span>
<span class="t " style="left:1252px;top:1020.3px;font-size:13px;color:#e0e2e6;letter-spacing:-0.278px">7.36</span>
<span class="t " style="left:1310.8px;top:1020.3px;font-size:13px;color:#e0e2e6;letter-spacing:-0.453px">SOL/USDT 欧易OKX</span>
<span class="t " style="left:1437px;top:1020.3px;font-size:13px;color:#e8454a;letter-spacing:-0.459px">+1.79%</span>
<span class="t " style="left:1489px;top:1020.3px;font-size:13px;color:#e0e2e6;letter-spacing:-0.128px">107.29</span>
<div class="a" style="left:1657px;top:1023px;width:14px;height:15px;background:#9a9fa8;border-radius:1px"></div>
<span class="t " style="left:1661px;top:1020px;font-size:11px;color:#111;font-weight:bold">?</span>
<svg class="i" style="left:1683px;top:1022px" width="20" height="16"><path d="M1,5.5a13,13 0 0 1 18,0M4,8.5a9,9 0 0 1 12,0M7,11.5a5,5 0 0 1 6,0" fill="none" stroke="#c8ccd2" stroke-width="1.4"/><circle cx="10" cy="14" r="1.3" fill="#c8ccd2"/></svg>
<span class="t " style="left:1707.8px;top:1021px;font-size:13px;color:#c8ccd2;letter-spacing:-0.180px">线路 3 :</span>
<span class="t " style="left:1754px;top:1021px;font-size:13px;color:#21a67a">优</span>
<span class="t " style="left:1789px;top:1020.3px;font-size:13px;color:#e0e2e6;letter-spacing:-1.245px">SGT</span><span class="t " style="left:1819.7px;top:1020.3px;font-size:13px;color:#e0e2e6;letter-spacing:0.039px">04/10 00:38:10</span>
<svg class="i" style="left:21px;top:52px" width="24" height="24"><defs><radialGradient id="sp" cx="0.4" cy="0.75" r="0.8"><stop offset="0" stop-color="#f0f0f0"/><stop offset="0.6" stop-color="#b0b0b0"/><stop offset="1" stop-color="#5a5a5a"/></radialGradient></defs><circle cx="12" cy="12" r="12" fill="url(#sp)"/><ellipse cx="9.500" cy="7" rx="7" ry="3.600" transform="rotate(-33 9.500 7)" fill="#0c0c0c"/><path d="M20.500,8.500c-1,3.500 -3,5.500 -5.500,6.500c2.500,0.300 4.500,-0.500 6,-1.500c0.300,-2 0,-3.500 -0.500,-5z" fill="#111"/><path d="M8,19.500c3.500,0.500 7,-0.500 9.500,-3c-2,3.500 -6,4.500 -9.500,3z" fill="#111"/></svg>
<span class="t" style="left:1px;width:64px;text-align:center;top:80.5px;font-size:12px;color:#7a7f88;">首页</span>
<svg class="i" style="left:23px;top:127px" width="20" height="22"><g fill="#2b8cf0"><rect x="0" y="8" width="5" height="10"/><rect x="7.5" y="0" width="5" height="18"/><rect x="15" y="6" width="5" height="12"/><rect x="0" y="19.5" width="20" height="2" opacity="0.6"/></g></svg>
<span class="t" style="left:1px;width:64px;text-align:center;top:154px;font-size:12px;color:#2b8cf0;font-weight:bold">行情</span>
<svg class="i" style="left:23px;top:203px" width="20" height="20"><path d="M4,0h16v20h-20v-11h4z" fill="#7f848c"/><path d="M7,5h9M7,10h9M7,15h5" stroke="#0e0f11" stroke-width="2"/></svg>
<span class="t" style="left:1px;width:64px;text-align:center;top:228px;font-size:12px;color:#7a7f88;">快讯</span>
<svg class="i" style="left:23px;top:276px" width="20" height="20"><rect x="1" y="5" width="18" height="13" rx="3" fill="#7f848c"/><rect x="7.5" y="1" width="5" height="5" fill="#7f848c"/><circle cx="6.5" cy="10.5" r="1.5" fill="#0e0f11"/><circle cx="13.5" cy="10.5" r="1.5" fill="#0e0f11"/><path d="M7,14q3,2.5 6,0" stroke="#0e0f11" fill="none" stroke-width="1.3"/></svg>
<span class="t" style="left:1px;width:64px;text-align:center;top:301px;font-size:12px;color:#7a7f88;">策略</span>
<svg class="i" style="left:23px;top:349px" width="20" height="20"><path d="M0,0h8l-8,8z" fill="#7f848c"/><circle cx="13" cy="6" r="6" fill="#7f848c"/><circle cx="7" cy="13" r="6.5" fill="#7f848c" stroke="#0e0f11"/><path d="M5,15v-3M7.5,15v-5M10,15v-2" stroke="#0e0f11" stroke-width="1.3"/><path d="M20,12v8h-8z" fill="#7f848c"/></svg>
<span class="t" style="left:1px;width:64px;text-align:center;top:375px;font-size:12px;color:#7a7f88;">Web3</span>
<svg class="i" style="left:23px;top:425px" width="20" height="18"><path d="M0,5l14,-5v4h6v14h-20z" fill="#7f848c"/><rect x="11" y="8" width="9" height="6" fill="#0e0f11"/><rect x="13" y="9.5" width="5" height="3" fill="#7f848c"/></svg>
<span class="t" style="left:1px;width:64px;text-align:center;top:448px;font-size:12px;color:#7a7f88;">资产</span>
<div class="a" style="left:39px;top:413px;width:28px;height:14px;background:#e8383d;border-radius:7px"></div>
<span class="t " style="left:42px;top:411px;font-size:10.5px;color:#fff;font-weight:bold">链上</span>
<svg class="i" style="left:23px;top:497px" width="20" height="19"><path d="M0,0h20v15h-12l-5,4v-4h-3z" fill="#7f848c"/><path d="M6,7q4,3 8,0" stroke="#0e0f11" fill="none" stroke-width="1.4"/></svg>
<span class="t" style="left:1px;width:64px;text-align:center;top:522px;font-size:12px;color:#7a7f88;">群聊</span>
<svg class="i" style="left:23px;top:571px" width="22" height="22"><g fill="#7f848c"><rect x="0" y="0" width="8" height="8"/><rect x="0" y="10" width="8" height="8"/><rect x="10" y="10" width="8" height="8"/><path d="M14,-1l5,5l-5,5l-5,-5z"/><path d="M22,18v4h-4z"/></g></svg>
<span class="t" style="left:1px;width:64px;text-align:center;top:599px;font-size:12px;color:#7a7f88;">更多</span>
<svg class="i" style="left:23px;top:941.5px" width="20" height="18"><path d="M5,1h10l4,5.500l-9,10l-9,-10z" fill="none" stroke="#d8aa45" stroke-width="1.6" stroke-linejoin="round"/><path d="M7.500,6h5" stroke="#d8aa45" stroke-width="1.500"/></svg>
<span class="t" style="left:1px;width:64px;text-align:center;top:957px;font-size:12px;color:#d8aa45;font-weight:bold">VIP</span>
<svg class="i" style="left:23px;top:1003px" width="20" height="22"><path d="M10,1l8.5,5v10l-8.5,5l-8.5,-5v-10z" fill="none" stroke="#7f848c" stroke-width="1.6"/><circle cx="10" cy="11" r="3" fill="none" stroke="#7f848c" stroke-width="1.6"/></svg>
<div class="a" style="left:44px;top:1003px;width:5px;height:5px;border-radius:50%;background:#e8454a"></div>
<div class="a" style="left:66px;top:506px;width:7px;height:36px;background:#34363a;border-radius:2px"></div>
<svg class="i" style="left:68px;top:520px" width="4" height="8"><path d="M0,0l4,4l-4,4z" fill="#b0b4ba"/></svg>
<div class="a" style="left:1866px;top:504px;width:7px;height:40px;background:#34363a;border-radius:2px"></div>
<svg class="i" style="left:1868px;top:520px" width="4" height="8"><path d="M4,0l-4,4l4,4z" fill="#b0b4ba"/></svg>
<svg class="i" style="left:1888px;top:56px" width="18" height="16"><rect x="0.8" y="0.8" width="4" height="5.5" rx="1" fill="none" stroke="#8a8f98" stroke-width="1.4"/><rect x="0.8" y="9.5" width="4" height="5.5" rx="1" fill="none" stroke="#8a8f98" stroke-width="1.4"/><path d="M8,2h9M8,5.5h9M8,10.5h9M8,14h9" stroke="#8a8f98" stroke-width="1.4"/></svg>
<svg class="i" style="left:1889px;top:111px" width="16" height="18"><rect x="0.8" y="0.8" width="14" height="16.4" rx="1.5" fill="none" stroke="#8a8f98" stroke-width="1.4"/><path d="M4,5.5h8M4,9h8M4,12.5h5" stroke="#8a8f98" stroke-width="1.3"/></svg>
<svg class="i" style="left:1888px;top:167px" width="18" height="18"><path d="M4,13v-12h13v15.5h-14a2,2 0 0 1 0,-4z" fill="none" stroke="#8a8f98" stroke-width="1.4"/></svg><span class="t " style="left:1896px;top:167px;font-size:10px;color:#8a8f98;font-weight:bold">$</span>
<svg class="i" style="left:1888px;top:222px" width="18" height="18"><path d="M1,9l6,-4l3,2l7,-6M13,1h4v4" fill="none" stroke="#8a8f98" stroke-width="1.3"/><path d="M3,17v-4M7.5,17v-7M12,17v-6M16.500,17v-9" stroke="#8a8f98" stroke-width="1.6"/></svg>
<svg class="i" style="left:1888px;top:281px" width="18" height="17"><rect x="0.8" y="0.8" width="16.4" height="11.4" rx="1" fill="none" stroke="#8a8f98" stroke-width="1.4"/><path d="M5,9v-3M9,9v-5M13,9v-4M4,15.500h10" stroke="#8a8f98" stroke-width="1.5"/></svg>
<div class="a" style="left:1881px;top:316px;width:32px;height:1px;background:#2a2c30"></div>
<svg class="i" style="left:1889px;top:336px" width="16" height="16"><circle cx="8" cy="8" r="7.2" fill="none" stroke="#8a8f98" stroke-width="1.3"/><path d="M4,6.500h8l-2.500,-2.500M12,9.500h-8l2.500,2.500" fill="none" stroke="#8a8f98" stroke-width="1.2"/></svg>
<svg class="i" style="left:1888px;top:851px" width="19" height="18"><rect x="0.8" y="0.8" width="17.4" height="16.400" rx="1" fill="none" stroke="#8a8f98" stroke-width="1.5"/><path d="M1,6h17M6.500,6v11" stroke="#8a8f98" stroke-width="1.5"/></svg>
<svg class="i" style="left:1889px;top:907px" width="17" height="17"><path d="M2.500,11v-3a6,6 0 0 1 12,0v3" fill="none" stroke="#8a8f98" stroke-width="2"/><rect x="0.500" y="8" width="3.500" height="6" rx="1" fill="#8a8f98"/><rect x="13" y="8" width="3.500" height="6" rx="1" fill="#8a8f98"/><path d="M14,14q0,2.500 -4,2.500" fill="none" stroke="#8a8f98" stroke-width="1.300"/></svg>
<svg class="i" style="left:1885px;top:961.5px" width="24" height="24"><path d="M2.500,8l0.500,-6l5,3zM21.500,8l-0.500,-6l-5,3z" fill="#e4e8f2"/><path d="M7.500,17.500h9l1.500,4.500a8,3 0 0 1 -12,0z" fill="#dfe3ee"/><ellipse cx="12" cy="10.800" rx="11.300" ry="8.800" fill="#eef0f7"/><ellipse cx="12" cy="12" rx="8.800" ry="5.800" fill="#14143e" stroke="#5a4ae0" stroke-width="1.200"/><ellipse cx="8.800" cy="12.300" rx="1.700" ry="2.200" fill="#fff"/><ellipse cx="15.200" cy="12.300" rx="1.700" ry="2.200" fill="#fff"/></svg>
</body></html>
